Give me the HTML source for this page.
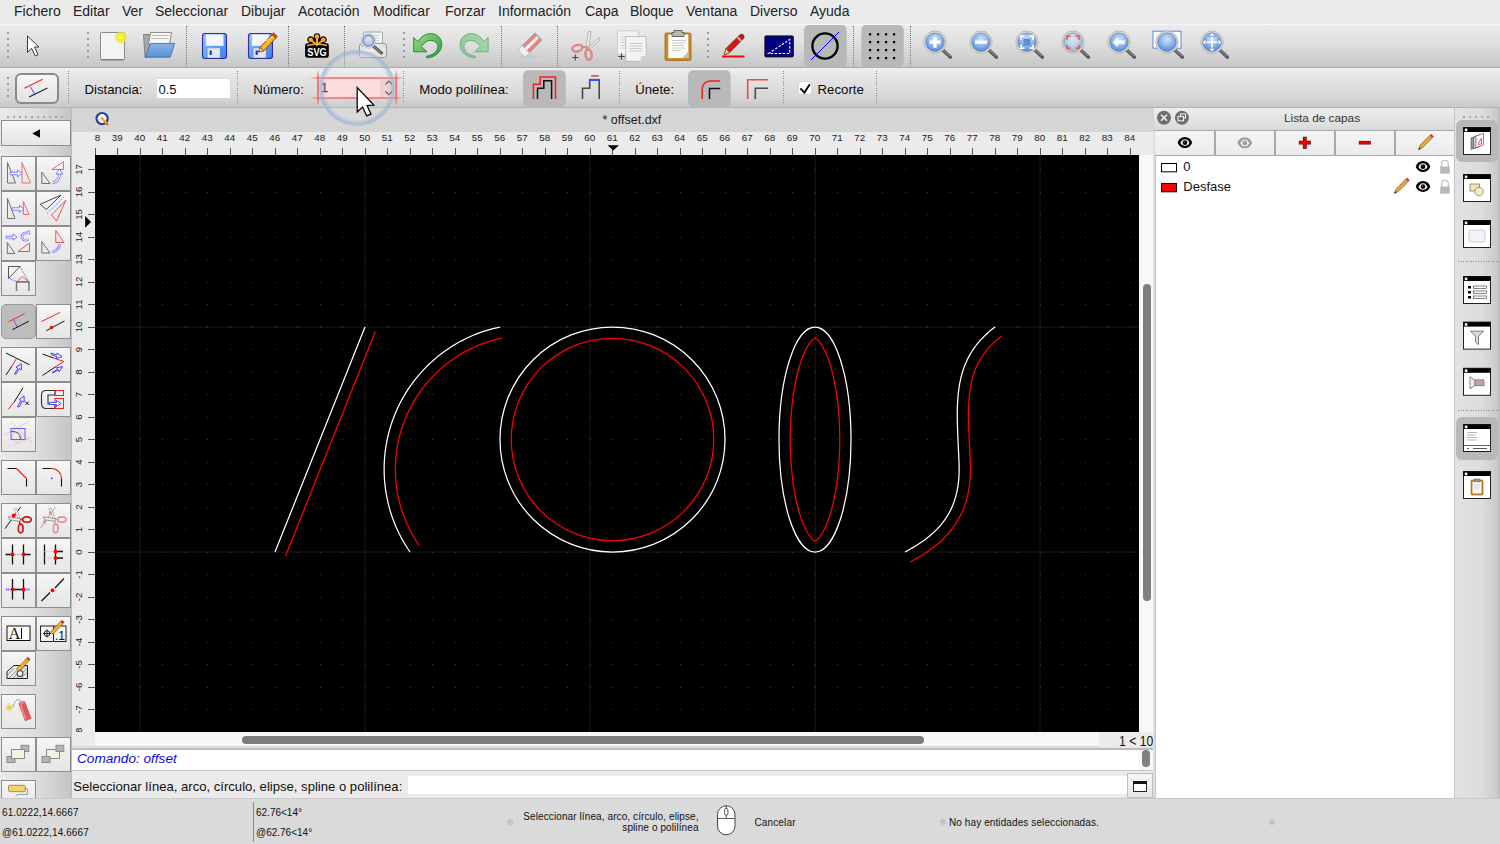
<!DOCTYPE html>
<html><head><meta charset="utf-8">
<style>
*{margin:0;padding:0;box-sizing:border-box}
html,body{width:1500px;height:844px;overflow:hidden;background:#d6d6d6;font-family:"Liberation Sans",sans-serif;color:#1a1a1a}
.a{position:absolute}
.t{position:absolute;white-space:nowrap;line-height:1}
#menubar{left:0;top:0;width:1500px;height:24px;background:#ebebeb}
#menubar span{position:absolute;top:3px;font-size:14px;color:#222}
#tb1{left:0;top:24px;width:1500px;height:44px;background:linear-gradient(#ebebeb,#e2e2e2 35%,#d0d0d0 80%,#c6c6c6);border-top:1px solid #f6f6f6;border-bottom:1px solid #a9a9a9}
#tb2{z-index:2;left:0;top:68px;width:1500px;height:40px;background:linear-gradient(#f0f0f0,#e6e6e6 20%,#d6d6d6 75%,#c8c8c8);border-bottom:1px solid #b4b4b4}
.hdl{position:absolute;width:2px;background:repeating-linear-gradient(#9c9c9c 0 2px,transparent 2px 6px)}
.sep{position:absolute;width:1px;border-left:1px dotted #777}
.sep2{position:absolute;width:1px;background:repeating-linear-gradient(#8a8a8a 0 1px,transparent 1px 2.4px)}
.hdl4{position:absolute;width:2px;height:20px;background:repeating-linear-gradient(#9c9c9c 0 2px,transparent 2px 6px)}
.pressed{position:absolute;background:#b4b4b4;border-radius:7px}
#palette{left:0;top:107px;width:72px;height:691px;background:linear-gradient(90deg,#eaeaea,#dedede 50%,#c6c6c6 97%,#b8b8b8)}
.btn{position:absolute;width:35px;height:35px;border:1px solid #8e8e8e;background:linear-gradient(#f6f6f6,#ededed 50%,#e6e6e6)}
.btn.on{background:#bdbdbd;border-color:#9a9a9a;border-radius:5px}
#mdititle{left:72px;top:107px;width:1083px;height:25px;background:#d5d5d5}
#hruler{left:72px;top:132px;width:1081px;height:23px;background:#ebebeb}
#vruler{left:72px;top:155px;width:23px;height:591px;background:#ebebeb}
#canvas{left:95px;top:155px;width:1044px;height:577px;background:#000;overflow:hidden}
#vscroll{left:1139px;top:155px;width:14px;height:591px;background:#f8f8f8}
#hscroll{left:95px;top:732px;width:1004px;height:14px;background:#f7f7f7}
#status{left:0;top:798px;width:1500px;height:46px;background:#dadada}
#panel{left:1155px;top:107px;width:300px;height:691px;background:#fff;border-left:1px solid #c8c8c8}
#dock{left:1455px;top:107px;width:45px;height:691px;background:linear-gradient(90deg,#e2e2e2,#dcdcdc 60%,#c9c9c9 94%,#b9b9b9)}
</style></head><body>

<div id="menubar" class="a">
<span style="left:14px">Fichero</span>
<span style="left:73px">Editar</span>
<span style="left:122px">Ver</span>
<span style="left:155px">Seleccionar</span>
<span style="left:241px">Dibujar</span>
<span style="left:298px">Acotación</span>
<span style="left:373px">Modificar</span>
<span style="left:445px">Forzar</span>
<span style="left:498px">Información</span>
<span style="left:585px">Capa</span>
<span style="left:630px">Bloque</span>
<span style="left:686px">Ventana</span>
<span style="left:750px">Diverso</span>
<span style="left:810px">Ayuda</span>
</div>

<div id="tb1" class="a">

<div class="hdl" style="left:7px;top:7px;height:27px"></div>
<svg class="a" style="left:0;top:-25px" width="1500" height="68">
<defs>
<linearGradient id="gBlue" x1="0" y1="0" x2="1" y2="1"><stop offset="0" stop-color="#8fc0ff"/><stop offset="1" stop-color="#3c7fe6"/></linearGradient>
<linearGradient id="gGreen" x1="0" y1="0" x2="1" y2="1"><stop offset="0" stop-color="#9bdc7c"/><stop offset="1" stop-color="#2f9e45"/></linearGradient>
<linearGradient id="gGreenL" x1="0" y1="0" x2="1" y2="1"><stop offset="0" stop-color="#a8dab0"/><stop offset="1" stop-color="#86c596"/></linearGradient>
<linearGradient id="gFold" x1="0" y1="0" x2="0" y2="1"><stop offset="0" stop-color="#8ab4e8"/><stop offset="1" stop-color="#5a8fd6"/></linearGradient>
<radialGradient id="gLens" cx="0.5" cy="0.35" r="0.6"><stop offset="0" stop-color="#d6e6fb"/><stop offset="0.6" stop-color="#8fb5ea"/><stop offset="1" stop-color="#5e8fd8"/></radialGradient>
<radialGradient id="gLensG" cx="0.5" cy="0.35" r="0.6"><stop offset="0" stop-color="#dfe7f1"/><stop offset="1" stop-color="#a9bdd6"/></radialGradient>
<radialGradient id="gGlow" cx="0.5" cy="0.5" r="0.5"><stop offset="0" stop-color="#ffffe0"/><stop offset="0.35" stop-color="#f4ef2a"/><stop offset="0.8" stop-color="#ece430" stop-opacity="0.8"/><stop offset="1" stop-color="#f0ea60" stop-opacity="0"/></radialGradient>
</defs>
<!-- pointer -->
<path d="M27.5 36 L27.5 52.5 L31.5 48.2 L35.3 56 L38 54.8 L34.6 47 L38.8 47 Z" fill="#fff" stroke="#3a3a3a" stroke-width="1" stroke-linejoin="miter"/>
<!-- new doc -->
<rect x="100.5" y="32.5" width="24" height="27" rx="1" fill="#f3f3f3" stroke="#8a8a8a"/>
<line x1="101" y1="59.8" x2="124" y2="59.8" stroke="#777" stroke-width="1.2"/>
<circle cx="120.8" cy="37.4" r="6.5" fill="url(#gGlow)"/>
<!-- open -->
<path d="M143.5 34.5 h7 v22 l-5.5 1 z" fill="#a8a8a8" stroke="#6e6e6e" stroke-width="0.8"/>
<path d="M150.5 32.5 h21 l-2 12 h-21 z" fill="#f6f6f6" stroke="#777" stroke-width="0.8"/>
<path d="M152 35.5 h17 M151.5 38.5 h17" stroke="#b5b5b5" stroke-width="1"/>
<path d="M150.2 43.4 L174.5 43.4 L170.3 57.2 L145.4 57.2 Z" fill="url(#gFold)" stroke="#3f6fb5" stroke-width="0.9"/>
<!-- save -->
<g id="floppy">
<rect x="202.5" y="33.5" width="24" height="25" rx="2.5" fill="url(#gBlue)" stroke="#2a2f9a" stroke-width="1.1"/>
<rect x="205.8" y="34.4" width="17.7" height="11.4" fill="#f2f5fc"/>
<rect x="207.6" y="48.2" width="12.3" height="9.5" fill="#e4e4ea"/>
<rect x="209.6" y="50.5" width="2.2" height="4.5" fill="#1a3ad0"/>
</g>
<!-- save as -->
<use href="#floppy" x="46"/>
<path d="M260 47.5 L272 34.5 L275.8 38 L263.8 51 Z" fill="#f8b428" stroke="#8a2c10" stroke-width="0.9"/>
<path d="M266 41 L273.8 36.3" stroke="#ffe070" stroke-width="1"/>
<path d="M260 47.5 L263.8 51 L258.3 52 Z" fill="#f2d8b0" stroke="#8a2c10" stroke-width="0.7"/>
<path d="M258.3 52 L259.2 50.2 L260.2 51.2 Z" fill="#222"/>
<path d="M272 34.5 L273.5 32.8 L277.3 36.3 L275.8 38 Z" fill="#e85030" stroke="#8a2c10" stroke-width="0.8"/>
<!-- svg -->
<rect x="305.1" y="43.4" width="23.7" height="14.4" rx="2.5" fill="#000"/>
<g stroke="#000" stroke-width="6.5" stroke-linecap="round" fill="none"><path d="M317 45 L317 36.5 M317 45 L310.6 39.6 M317 45 L323.4 39.6"/></g>
<path d="M306 45.5 Q317 41 328 45.5" stroke="#000" stroke-width="3" fill="none"/>
<g stroke="#f7a824" stroke-width="2" stroke-linecap="round" fill="none"><path d="M317 45 L317 37 M317 45 L311 40 M317 45 L323 40"/></g>
<circle cx="317" cy="36.6" r="2.3" fill="#f7a824"/><circle cx="310.7" cy="39.7" r="2.3" fill="#f7a824"/><circle cx="323.3" cy="39.7" r="2.3" fill="#f7a824"/>
<path d="M307 45.6 Q317 42.3 327 45.6" stroke="#f7a824" stroke-width="1.6" fill="none"/>
<text x="317" y="56.3" font-family="Liberation Sans" font-weight="bold" font-size="11.5" fill="#fff" text-anchor="middle" textLength="19.5" lengthAdjust="spacingAndGlyphs">SVG</text>
<!-- print preview -->
<rect x="363.5" y="32" width="19" height="14" rx="1" fill="#f4f4f4" stroke="#a0a0a0" stroke-width="0.9"/>
<path d="M366 35.5 h13 M366 38 h13 M366 40.5 h13" stroke="#cfcfcf" stroke-width="1"/>
<path d="M359.5 46 Q359.5 43.4 362 43.4 H384 Q386.5 43.4 386.5 46 V55.5 Q386.5 57.5 384.5 57.5 H361.5 Q359.5 57.5 359.5 55.5 Z" fill="#e4e4e4" stroke="#8c8c8c" stroke-width="0.9"/>
<path d="M360.5 50.5 H385.5" stroke="#f6f6f6" stroke-width="1"/>
<circle cx="362" cy="46" r="0.6" fill="#555"/>
<path d="M372 45 L381.5 53" stroke="#5a5a5a" stroke-width="3.2" stroke-linecap="round"/>
<path d="M372.3 45.3 L381 52.6" stroke="#9a9a9a" stroke-width="1"/>
<circle cx="368.4" cy="40.7" r="7.3" fill="#f0f0f0" stroke="#b8b8b8" stroke-width="0.7"/>
<circle cx="368.4" cy="40.7" r="5.6" fill="url(#gLensG)" stroke="#4f86d0" stroke-width="1.1"/>
<!-- undo -->
<path d="M413.7 37.4 L413.7 51.8 L426.9 51.8 L421.5 46.4 C424 43.2 427 40.4 430.2 40.4 C435 40.4 437.9 43.3 437.9 46.5 C437.9 51.2 432.5 55.6 426.4 56.2 L426.6 57.8 C434.5 57.8 441.8 52 441.8 44.5 C441.8 38 436.5 33.6 430.8 33.6 C425.5 33.6 421 36.8 417.8 41.6 Z" fill="url(#gGreen)" stroke="#17853a" stroke-width="0.9" stroke-linejoin="round"/>
<!-- redo -->
<g transform="translate(901.8,0) scale(-1,1)">
<path d="M413.7 37.4 L413.7 51.8 L426.9 51.8 L421.5 46.4 C424 43.2 427 40.4 430.2 40.4 C435 40.4 437.9 43.3 437.9 46.5 C437.9 51.2 432.5 55.6 426.4 56.2 L426.6 57.8 C434.5 57.8 441.8 52 441.8 44.5 C441.8 38 436.5 33.6 430.8 33.6 C425.5 33.6 421 36.8 417.8 41.6 Z" fill="url(#gGreenL)" stroke="#62ad7c" stroke-width="0.9" stroke-linejoin="round"/>
</g>
<!-- eraser -->
<ellipse cx="531" cy="56.5" rx="11" ry="1.8" fill="#c8c8c8" opacity="0.7"/>
<g transform="translate(530,45) rotate(-45)">
<rect x="-12" y="-5" width="24" height="10" fill="#e08888" stroke="#c06a6a" stroke-width="0.6"/>
<rect x="-7" y="-1.6" width="19" height="3" fill="#f4f4f4"/>
<rect x="-12" y="-5" width="6" height="10" fill="#f2f2f2" stroke="#bdbdbd" stroke-width="0.6"/>
<rect x="11" y="-5" width="1.6" height="10" fill="#aaa"/>
</g>
<!-- cut -->
<path d="M586 47 L588.5 31.5 L591 31.7 L589 46 Z M589 47 L599.5 37.5 L600 40 L590 48.5 Z" fill="#f0f0f0" stroke="#9a9a9a" stroke-width="0.7"/>
<ellipse cx="577.3" cy="48.2" rx="5.2" ry="3.2" transform="rotate(-15 577.3 48.2)" fill="none" stroke="#e08282" stroke-width="2.3"/>
<ellipse cx="588.6" cy="54.6" rx="3.1" ry="5.2" transform="rotate(-8 588.6 54.6)" fill="none" stroke="#e08282" stroke-width="2.3"/>
<path d="M582 47 L587 47.5 L588 49.5" fill="none" stroke="#e08282" stroke-width="2"/>
<path d="M572.3 57.5 h6 M575.3 54.5 v6" stroke="#444" stroke-width="1"/>
<!-- copy -->
<rect x="617.5" y="30.8" width="21" height="24" rx="1" fill="#f2f2f2" stroke="#c2c2c2" stroke-width="0.8"/>
<path d="M620.5 37 h5 M620.5 40 h5 M620.5 42.5 h5 M620.5 45.5 h5 M620.5 48 h5" stroke="#d0d0d0" stroke-width="1"/>
<path d="M625.7 36.5 h20.5 v19 l-5.5 5.8 h-15 z" fill="#f3f3f3" stroke="#b8b8b8" stroke-width="0.9"/>
<path d="M640.7 61.3 l0 -5 l5.5 -0.3 z" fill="#d2d2d2"/>
<path d="M629.5 43.5 h13 M629.5 46 h13 M629.5 48.5 h12 M629.5 51 h13" stroke="#c8c8c8" stroke-width="1"/>
<path d="M618.3 56.5 h6.5 M621.5 53.3 v6.5" stroke="#444" stroke-width="1.1"/>
<!-- paste -->
<rect x="665" y="33" width="26" height="27.5" rx="1.5" fill="#c88a2a" stroke="#9a6418" stroke-width="0.8"/>
<rect x="668.3" y="34.5" width="20" height="23.5" fill="#fbfbfb"/>
<path d="M688.3 51.5 l-6 6.5 h6 z" fill="#bdbdbd"/>
<path d="M672 40.5 h14 M672 43 h14 M672 45.5 h12 M672 48 h14 M672 50.5 h9" stroke="#c8c8c8" stroke-width="1"/>
<path d="M674 30.5 h8 v2 h2 v4 h-12 v-4 h2 z" fill="#b8b8ac" stroke="#5a5a5a" stroke-width="0.9"/>
<!-- pencil red -->
<path d="M722 56.5 h22.5" stroke="#ff0000" stroke-width="2"/>
<path d="M724.2 54.8 L726 48.6 L739.8 34.8 Q742.5 33.4 743.9 35.4 Q744.6 37.5 743.4 38.7 L729.6 52.6 Z" fill="#d21818" stroke="#6a3a10" stroke-width="0.8"/>
<path d="M726 48.6 L729.6 52.6 L724.2 54.8 Z" fill="#f2d0a8" stroke="#6a3a10" stroke-width="0.6"/>
<path d="M737.5 37.1 L741.1 40.9" stroke="#cfcfcf" stroke-width="1.6"/>
<!-- blue rect -->
<rect x="764.9" y="35.9" width="28.4" height="21" rx="1" fill="#000080" stroke="#111" stroke-width="1"/>
<path d="M768.5 53.5 L789.7 39.5 L789.7 53.5 Z" fill="none" stroke="#fff" stroke-width="1.1" stroke-dasharray="2.5 1.5"/>
<!-- pressed circle -->
<rect x="804" y="25" width="42.7" height="42.5" rx="5" fill="#b8b8b8"/>
<circle cx="825" cy="46" r="12.6" fill="none" stroke="#000" stroke-width="2.3"/>
<line x1="811" y1="60" x2="839" y2="32" stroke="#0000ff" stroke-width="1"/>
<!-- pressed grid -->
<rect x="861.3" y="25" width="42.4" height="42.5" rx="5" fill="#b8b8b8"/>
<g fill="#000">
<rect x="869" y="33.2" width="2.2" height="2.2"/><rect x="869" y="41" width="2.2" height="2.2"/><rect x="869" y="49" width="2.2" height="2.2"/><rect x="869" y="57" width="2.2" height="2.2"/><rect x="877" y="33.2" width="2.2" height="2.2"/><rect x="877" y="41" width="2.2" height="2.2"/><rect x="877" y="49" width="2.2" height="2.2"/><rect x="877" y="57" width="2.2" height="2.2"/><rect x="885" y="33.2" width="2.2" height="2.2"/><rect x="885" y="41" width="2.2" height="2.2"/><rect x="885" y="49" width="2.2" height="2.2"/><rect x="885" y="57" width="2.2" height="2.2"/><rect x="893" y="33.2" width="2.2" height="2.2"/><rect x="893" y="41" width="2.2" height="2.2"/><rect x="893" y="49" width="2.2" height="2.2"/><rect x="893" y="57" width="2.2" height="2.2"/>
</g>
<!-- zoom icons -->
<path d="M942.0 49.2 L950.5 57.2" stroke="#5a5a5a" stroke-width="3.4" stroke-linecap="round"/><path d="M943.0 49.800000000000004 L950.0 56.0" stroke="#9a9a9a" stroke-width="1"/><circle cx="935" cy="42.2" r="11.2" fill="#d9d9d0" stroke="#b0b0a8" stroke-width="0.8"/><circle cx="935" cy="42.2" r="9.2" fill="url(#gLens)" stroke="#4a7cc8" stroke-width="0.6"/><path d="M929.5 42.2 h11 M935 36.7 v11" stroke="#fff" stroke-width="3.2"/>
<path d="M988.0 49.2 L996.5 57.2" stroke="#5a5a5a" stroke-width="3.4" stroke-linecap="round"/><path d="M989.0 49.800000000000004 L996.0 56.0" stroke="#9a9a9a" stroke-width="1"/><circle cx="981" cy="42.2" r="11.2" fill="#d9d9d0" stroke="#b0b0a8" stroke-width="0.8"/><circle cx="981" cy="42.2" r="9.2" fill="url(#gLens)" stroke="#4a7cc8" stroke-width="0.6"/><path d="M975 42.2 h12" stroke="#fff" stroke-width="3.2"/>
<path d="M1034.0 49.2 L1042.5 57.2" stroke="#5a5a5a" stroke-width="3.4" stroke-linecap="round"/><path d="M1035.0 49.800000000000004 L1042.0 56.0" stroke="#9a9a9a" stroke-width="1"/><circle cx="1027" cy="42.2" r="11.2" fill="#d9d9d0" stroke="#b0b0a8" stroke-width="0.8"/><circle cx="1027" cy="42.2" r="9.2" fill="url(#gLens)" stroke="#4a7cc8" stroke-width="0.6"/><path d="M1021 39.7 v-3.5 h3.5" fill="none" stroke="#fff" stroke-width="1.8"/><path d="M1021 44.7 v3.5 h3.5" fill="none" stroke="#fff" stroke-width="1.8"/><path d="M1033 39.7 v-3.5 h-3.5" fill="none" stroke="#fff" stroke-width="1.8"/><path d="M1033 44.7 v3.5 h-3.5" fill="none" stroke="#fff" stroke-width="1.8"/><rect x="1023.5" y="38.7" width="7" height="7" fill="#5d8fd8"/>
<path d="M1080.0 49.2 L1088.5 57.2" stroke="#5a5a5a" stroke-width="3.4" stroke-linecap="round"/><path d="M1081.0 49.800000000000004 L1088.0 56.0" stroke="#9a9a9a" stroke-width="1"/><circle cx="1073" cy="42.2" r="11.2" fill="#d9d9d0" stroke="#b0b0a8" stroke-width="0.8"/><circle cx="1073" cy="42.2" r="9.2" fill="url(#gLensG)" stroke="#4a7cc8" stroke-width="0.6"/><path d="M1067 39.7 v-3.5 h3.5" fill="none" stroke="#e06060" stroke-width="1.8"/><path d="M1067 44.7 v3.5 h3.5" fill="none" stroke="#e06060" stroke-width="1.8"/><path d="M1079 39.7 v-3.5 h-3.5" fill="none" stroke="#e06060" stroke-width="1.8"/><path d="M1079 44.7 v3.5 h-3.5" fill="none" stroke="#e06060" stroke-width="1.8"/>
<path d="M1126.0 49.2 L1134.5 57.2" stroke="#5a5a5a" stroke-width="3.4" stroke-linecap="round"/><path d="M1127.0 49.800000000000004 L1134.0 56.0" stroke="#9a9a9a" stroke-width="1"/><circle cx="1119" cy="42.2" r="11.2" fill="#d9d9d0" stroke="#b0b0a8" stroke-width="0.8"/><circle cx="1119" cy="42.2" r="9.2" fill="url(#gLens)" stroke="#4a7cc8" stroke-width="0.6"/><path d="M1113 42.2 l4.5 -4.5 v3 h7 v3 h-7 v3 z" fill="#fff" stroke="#fff" stroke-width="0.6" stroke-linejoin="round"/>
<rect x="1153" y="31.200000000000003" width="28" height="17" fill="#fff" stroke="#5a8ad0" stroke-width="1"/><path d="M1174.0 49.2 L1182.5 57.2" stroke="#5a5a5a" stroke-width="3.4" stroke-linecap="round"/><path d="M1175.0 49.800000000000004 L1182.0 56.0" stroke="#9a9a9a" stroke-width="1"/><circle cx="1167" cy="42.2" r="11.2" fill="#d9d9d0" stroke="#b0b0a8" stroke-width="0.8"/><circle cx="1167" cy="42.2" r="9.2" fill="url(#gLens)" stroke="#4a7cc8" stroke-width="0.6"/>
<path d="M1219.0 49.2 L1227.5 57.2" stroke="#5a5a5a" stroke-width="3.4" stroke-linecap="round"/><path d="M1220.0 49.800000000000004 L1227.0 56.0" stroke="#9a9a9a" stroke-width="1"/><circle cx="1212" cy="42.2" r="11.2" fill="#d9d9d0" stroke="#b0b0a8" stroke-width="0.8"/><circle cx="1212" cy="42.2" r="9.2" fill="url(#gLens)" stroke="#4a7cc8" stroke-width="0.6"/><path d="M1204 42.2 h16 M1212 34.2 v16" stroke="#fff" stroke-width="1.6"/><path d="M1222 42.2 l-4 -3.5 v7 z" fill="#fff" stroke="#4a7cc8" stroke-width="0.7"/><path d="M1202 42.2 l4 -3.5 v7 z" fill="#fff" stroke="#4a7cc8" stroke-width="0.7"/><path d="M1212 52.2 l-3.5 -4 h7 z" fill="#fff" stroke="#4a7cc8" stroke-width="0.7"/><path d="M1212 32.2 l-3.5 4 h7 z" fill="#fff" stroke="#4a7cc8" stroke-width="0.7"/>
</svg>
<div class="sep" style="left:186px;top:1px;height:40px"></div>
<div class="sep" style="left:288px;top:1px;height:40px"></div>
<div class="sep" style="left:344px;top:1px;height:40px"></div>
<div class="hdl" style="left:87px;top:7px;height:27px"></div>
<div class="hdl" style="left:403px;top:7px;height:27px"></div>
<div class="sep" style="left:501px;top:1px;height:40px"></div>
<div class="sep" style="left:557px;top:1px;height:40px"></div>
<div class="hdl" style="left:707px;top:7px;height:27px"></div>
<div class="sep" style="left:853px;top:1px;height:40px"></div>
<div class="sep" style="left:910px;top:1px;height:40px"></div>

</div>

<div id="tb2" class="a">

<div class="hdl4" style="left:7px;top:9px"></div>
<div class="a" style="left:14.5px;top:4.8px;width:44px;height:31.5px;border:2px solid #8a8a8a;border-radius:6px;background:linear-gradient(#f7f7f7,#ececec 50%,#e2e2e2)"></div>
<svg class="a" style="left:0;top:-68px" width="1500" height="108">
<path d="M24.5 88.3 L42.6 79.2" stroke="#ff2020" stroke-width="1.1"/>
<path d="M29.1 97 L47.4 88" stroke="#222" stroke-width="1.1"/>
<path d="M30.5 87 L35 94.5" stroke="#3030ff" stroke-width="0.9"/>
<rect x="523.1" y="70.2" width="42.7" height="36.5" rx="5" fill="#b9b9b9"/>
<path d="M533.4 99 V84.2 H540.2 V77 H555.5 V99" fill="none" stroke="#ff1a1a" stroke-width="1.5"/>
<path d="M537.5 99 V88.3 H543.8 V80.8 H551.6 V99" fill="none" stroke="#111" stroke-width="1.5"/>
<path d="M582.5 99 V88.2 H589.7 V79.7 H599.2 V99" fill="none" stroke="#4a4a4a" stroke-width="1.6"/>
<path d="M589.7 79.9 H599.2" stroke="#3a50ff" stroke-width="2.2"/>
<path d="M591.1 75.9 H598.7" stroke="#f05050" stroke-width="1.8"/>
<rect x="688.1" y="70.2" width="42.5" height="36.5" rx="5" fill="#b9b9b9"/>
<path d="M702.2 99 V89 A8 8 0 0 1 710.2 81 H720.2" fill="none" stroke="#ff1a1a" stroke-width="1.5"/>
<path d="M709.5 99 V88.5 H720.2" fill="none" stroke="#111" stroke-width="1.5"/>
<path d="M747.7 99 V79.7 H767.9" fill="none" stroke="#f04848" stroke-width="1.6"/>
<path d="M755.3 99 V88.2 H767.9" fill="none" stroke="#4a4a4a" stroke-width="1.6"/>
<path d="M800.4 88.4 L804.4 92.6 L809.8 84.2" fill="none" stroke="#111" stroke-width="2"/>
</svg>
<div class="a" style="left:798.8px;top:13.6px;width:12px;height:12.4px;background:#fff;border-radius:2.5px;box-shadow:0 0 0 0.5px #d0d0d0"></div>
<svg class="a" style="left:0;top:-68px" width="1500" height="108"><path d="M800.4 88.4 L804.4 92.6 L809.8 84.2" fill="none" stroke="#111" stroke-width="2"/></svg>
<div class="sep2" style="left:68px;top:3px;height:34px"></div>
<div class="sep2" style="left:237px;top:3px;height:34px"></div>
<div class="sep2" style="left:403px;top:3px;height:34px"></div>
<div class="sep2" style="left:619px;top:3px;height:34px"></div>
<div class="sep2" style="left:783px;top:3px;height:34px"></div>
<div class="sep2" style="left:876px;top:3px;height:34px"></div>
<span class="t" style="left:84.5px;top:15px;font-size:13.2px;color:#0a0a0a">Distancia:</span>
<div class="a" style="left:156.8px;top:10.9px;width:73.2px;height:19.1px;background:#fff;box-shadow:0 0 0 0.5px #d8d8d8"></div>
<span class="t" style="left:158.5px;top:15px;font-size:13px;color:#111">0.5</span>
<span class="t" style="left:253.3px;top:15px;font-size:13.2px;color:#0a0a0a">Número:</span>
<span class="t" style="left:419.2px;top:15px;font-size:13.2px;color:#0a0a0a">Modo polilínea:</span>
<span class="t" style="left:635.2px;top:15px;font-size:13.2px;color:#0a0a0a">Únete:</span>
<span class="t" style="left:817.6px;top:15px;font-size:13.2px;color:#0a0a0a">Recorte</span>

</div>

<div id="palette" class="a">

<div class="a" style="left:7px;top:9px;width:58px;height:2px;background:repeating-linear-gradient(90deg,#a4a4a4 0 2px,transparent 2px 6px)"></div>
<div class="a" style="left:1px;top:13px;width:70px;height:26px;border:1px solid #8e8e8e;background:linear-gradient(#f7f7f7,#ededed 50%,#e6e6e6)"></div>
<svg class="a" style="left:0;top:0" width="72" height="40"><path d="M32.3 26.5 L40 22.3 L40 30.7 Z" fill="#000"/></svg>
<div class="btn" style="left:1px;top:49px"></div>
<div class="btn" style="left:36px;top:49px"></div>
<div class="btn" style="left:1px;top:84px"></div>
<div class="btn" style="left:36px;top:84px"></div>
<div class="btn" style="left:1px;top:119px"></div>
<div class="btn" style="left:36px;top:119px"></div>
<div class="btn" style="left:1px;top:154px"></div>
<div class="btn on" style="left:1px;top:197px"></div>
<div class="btn" style="left:36px;top:197px"></div>
<div class="btn" style="left:1px;top:240px"></div>
<div class="btn" style="left:36px;top:240px"></div>
<div class="btn" style="left:1px;top:275px"></div>
<div class="btn" style="left:36px;top:275px"></div>
<div class="btn" style="left:1px;top:310px"></div>
<div class="btn" style="left:1px;top:353px"></div>
<div class="btn" style="left:36px;top:353px"></div>
<div class="btn" style="left:1px;top:396px"></div>
<div class="btn" style="left:36px;top:396px"></div>
<div class="btn" style="left:1px;top:431px"></div>
<div class="btn" style="left:36px;top:431px"></div>
<div class="btn" style="left:1px;top:466px"></div>
<div class="btn" style="left:36px;top:466px"></div>
<div class="btn" style="left:1px;top:509px"></div>
<div class="btn" style="left:36px;top:509px"></div>
<div class="btn" style="left:1px;top:544px"></div>
<div class="btn" style="left:1px;top:587px"></div>
<div class="btn" style="left:1px;top:630px"></div>
<div class="btn" style="left:36px;top:630px"></div>
<div class="btn" style="left:1px;top:673px"></div>
<svg class="a" style="left:0;top:-107px" width="72" height="800" fill="none" stroke-width="1">
<!-- move -->
<path d="M7.5 162.5 V183 H15.5 Z" stroke="#707070"/>
<path d="M22 162.5 V183 H30.5 Z" stroke="#f06a6a"/>
<path d="M10 172.3 h7.5 v-2.2 l4.5 3.4 l-4.5 3.4 v-2.2 h-7.5 z" stroke="#6d6dff" stroke-width="0.9" fill="#fff"/>
<!-- rotate -->
<path d="M41.8 172 V183.5 H50 Z" stroke="#707070"/>
<path d="M51.8 169.5 L63.5 161.8 V169.5 Z" stroke="#f06a6a"/>
<path d="M52.5 182.8 Q59.5 181.5 59.4 173.5" stroke="#7a7aff" stroke-width="2.8"/><path d="M52.5 182.8 Q59.5 181.5 59.4 173.5" stroke="#fff" stroke-width="1.1"/>
<path d="M56 174 l3.4 -5 l3.4 5 z" stroke="#6d6dff" stroke-width="0.9" fill="#fff"/>
<!-- scale -->
<path d="M7.5 198.5 V218.5 H15 Z" stroke="#707070"/>
<path d="M23.3 201.5 V214.5 H29 Z" stroke="#f06a6a"/>
<path d="M12 207.8 h7.5 v-2.2 l4.5 3.4 l-4.5 3.4 v-2.2 h-7.5 z" stroke="#6d6dff" stroke-width="0.9" fill="#fff"/>
<!-- mirror -->
<path d="M40.3 204.3 L61 195 L46.3 209.5 Z" stroke="#444"/>
<path d="M66 200 L51.5 215 L56.5 221 Z" stroke="#f05050"/>
<path d="M47 213.5 L64 197" stroke="#6d6dff" stroke-dasharray="1.6 1.6"/>
<!-- move rotate -->
<path d="M6 236.2 h7 v-2 l4 3 l-4 3 v-2 h-7 z" stroke="#6d6dff" stroke-width="0.9" fill="#fff"/>
<path d="M27.8 233.8 A3.6 3.6 0 1 0 28.3 239" stroke="#7a7aff" stroke-width="2.6"/><path d="M27.8 233.8 A3.6 3.6 0 1 0 28.3 239" stroke="#fff" stroke-width="1"/><path d="M26 232 l3.5 -1.5 l0.3 4 z" fill="#fff" stroke="#7a7aff" stroke-width="0.8"/>
<path d="M7.3 242.5 V253.5 H15 Z" stroke="#707070"/>
<path d="M18 251.5 L29.5 243 V251.5 Z" stroke="#f05050"/>
<!-- rotate2 -->
<path d="M41.8 241.5 V253 H50 Z" stroke="#707070"/>
<path d="M55.8 230.5 V242.5 H64 Z" stroke="#f05050"/>
<path d="M52 252 Q59 250.5 59.5 244.5" stroke="#7a7aff" stroke-width="2.8"/><path d="M52 252 Q59 250.5 59.5 244.5" stroke="#fff" stroke-width="1.1" stroke-dasharray="1.5 0.8"/>
<!-- rotate3 -->
<path d="M8.5 266.5 H20 L8.5 278.5 Z" stroke="#555"/>
<path d="M8.5 278.5 L17 281.5 M20 266.5 L28.5 281.5" stroke="#7a7aff" stroke-width="0.7"/>
<path d="M17 281.5 L22.5 276.5 L28.5 281.5 Z" stroke="#f05050"/>
<path d="M16.5 291 V282 H29 V291" stroke="#777" stroke-width="1.4"/>
<!-- offset -->
<path d="M8.3 322 L24.7 313.5" stroke="#ff1f1f"/>
<path d="M13.5 319.5 L17.5 327.5" stroke="#5050ff" stroke-width="0.9"/>
<path d="M12.3 329.7 L28.8 321.2" stroke="#111"/>
<path d="M41.3 321.6 L60 312.4" stroke="#ff1f1f"/>
<path d="M46.3 330.7 L64.5 321" stroke="#111"/>
<circle cx="51.5" cy="327.5" r="1.7" fill="#ff0000" stroke="none"/>
<!-- trim -->
<path d="M6 353 L29.5 364.7 M6 375 L12 366" stroke="#111"/>
<path d="M12 366 L16.5 358.5" stroke="#f02020"/>
<path d="M14.5 374 l3.5 -5.5 l-2 -1.3 l5.2 -3.5 l0.3 6.2 l-2 -1.3 l-3.5 5.5 z" stroke="#3030ff" stroke-width="0.9"/>
<!-- trim2 -->
<path d="M42.5 354 L53.5 358 M56 366.5 L42.5 375.5" stroke="#111"/>
<path d="M53.5 358 L63.8 361.5 L56 366.5" stroke="#f02020"/>
<path d="M51 353 l5.5 2 l0.7 -2 l4.8 3.8 l-6 1.8 l0.7 -2 l-5.5 -2 z" stroke="#3030ff" stroke-width="0.9"/>
<path d="M52 372.5 l5.5 -3 l-1 -1.8 l6 -1 l-3.3 5 l-1 -1.8 l-5.5 3 z" stroke="#3030ff" stroke-width="0.9"/>
<!-- lengthen -->
<path d="M23 387.8 L14.2 402" stroke="#111"/>
<path d="M14.2 402 L8.2 409.5" stroke="#f02020"/>
<path d="M17.5 406.5 l3.5 -6 l-1.8 -1 l4.8 -3.5 l0.3 6 l-1.8 -1 l-3.5 6 z" stroke="#3030ff" stroke-width="0.9"/>
<path d="M25.3 401.5 l3.5 3.5 M28.8 401.5 l-3.5 3.5" stroke="#222"/>
<!-- stretch -->
<path d="M55 390.5 H46 Q41.5 390.5 41.5 395 V403 Q41.5 408.5 46 408.5 H55 V404 H48 V395 H55 Z" stroke="#333" stroke-width="1.1"/>
<rect x="55" y="390.5" width="8.5" height="5" stroke="#f02020"/>
<rect x="55" y="398.5" width="8.5" height="10" stroke="#f02020"/>
<path d="M49.5 402.5 h7 v-2 l4.5 3 l-4.5 3 v-2 h-7 z" stroke="#4040ff" stroke-width="0.9" fill="#fff"/>
<!-- faint -->
<path d="M4 435 L29 421.5 M14 445.5 L31 437 M11 421.5 L32 443" stroke="#f4b4b4" stroke-width="0.8"/>
<circle cx="17" cy="437" r="5" stroke="#f4b4b4" stroke-width="0.8"/>
<rect x="11" y="428.5" width="14" height="11" stroke="#6060ff"/>
<path d="M11.5 431.5 Q20.5 431 20.5 439.5" stroke="#555"/>
<!-- chamfer -->
<path d="M7.5 468.5 H16.5 M26.5 478.5 V486.5" stroke="#111" stroke-width="1.1"/>
<path d="M16.5 468.5 L26.5 478.5" stroke="#f01a1a" stroke-width="1.2"/>
<path d="M42.5 468.5 H51.5 M61.5 478.5 V486.5" stroke="#111" stroke-width="1.1"/>
<path d="M51.5 468.5 A10 10 0 0 1 61.5 478.5" stroke="#f01a1a" stroke-width="1.2"/>
<circle cx="51.8" cy="478.3" r="0.9" fill="#2020ff" stroke="none"/>
<!-- break out -->
<g transform="translate(0,0)"><path d="M5 528.7 L20.5 507" stroke="#111" stroke-width="1"/><path d="M14 509 L16.3 508.3 L20.3 519 L18.5 519.3 Z" fill="#fafafa" stroke="#8a8a8a" stroke-width="0.6"/><path d="M8.2 516.8 L20.6 518.8 L20.2 521.3 L9.6 519.8 Z" fill="#f0f0f0" stroke="#707070" stroke-width="0.7"/><path d="M20.5 519.5 L22.8 519.5 M19.3 521.3 L20 524" stroke="#d01818" stroke-width="1.5"/><ellipse cx="26.9" cy="519.5" rx="4.3" ry="2.7" stroke="#d01818" stroke-width="1.7"/><ellipse cx="20.7" cy="528.5" rx="2.4" ry="4.3" stroke="#d01818" stroke-width="1.7"/><circle cx="13.7" cy="515.5" r="1.9" fill="#f00" stroke="none"/></g>
<g transform="translate(35,0)"><path d="M5 528.7 L20.5 507" stroke="#aaa" stroke-width="1"/><path d="M14 509 L16.3 508.3 L20.3 519 L18.5 519.3 Z" fill="#fafafa" stroke="#8a8a8a" stroke-width="0.6"/><path d="M8.2 516.8 L20.6 518.8 L20.2 521.3 L9.6 519.8 Z" fill="#f0f0f0" stroke="#707070" stroke-width="0.7"/><path d="M20.5 519.5 L22.8 519.5 M19.3 521.3 L20 524" stroke="#e89090" stroke-width="1.5"/><ellipse cx="26.9" cy="519.5" rx="4.3" ry="2.7" stroke="#e89090" stroke-width="1.7"/><ellipse cx="20.7" cy="528.5" rx="2.4" ry="4.3" stroke="#e89090" stroke-width="1.7"/><circle cx="15.5" cy="513" r="1.7" fill="#f48a8a" stroke="none"/><circle cx="9.5" cy="522" r="1.7" fill="#f48a8a" stroke="none"/></g>
<!-- divide -->
<path d="M12.5 544.5 V564.5 M23.5 544.5 V564.5 M5.5 554.5 H12.5 M23.5 554.5 H30.5" stroke="#111" stroke-width="1.3"/>
<path d="M12.5 554.5 H23.5" stroke="#bbb"/>
<circle cx="12.5" cy="554.5" r="1.9" fill="#f00" stroke="none"/>
<circle cx="23.5" cy="554.5" r="1.9" fill="#f00" stroke="none"/>
<path d="M44.5 544.5 V564.5 M55.5 544.5 V564.5 M55.5 551.5 H63 M55.5 558 H63" stroke="#111" stroke-width="1.3"/>
<path d="M44.5 551.5 H55.5 M44.5 558 H55.5" stroke="#c8c8c8" stroke-dasharray="1 1"/>
<circle cx="55.5" cy="551.5" r="1.9" fill="#f00" stroke="none"/>
<circle cx="55.5" cy="558" r="1.9" fill="#f00" stroke="none"/>
<path d="M12.5 579 V599.5 M23.5 579 V599.5 M12.5 589.5 H23.5" stroke="#111" stroke-width="1.3"/>
<path d="M6 588 l3 3 M9 588 l-3 3 M26.5 588 l3 3 M29.5 588 l-3 3 M6 589.5 h6 M24 589.5 h5.5" stroke="#6a6aff" stroke-width="0.7"/>
<circle cx="12.5" cy="589.5" r="1.9" fill="#f00" stroke="none"/>
<circle cx="23.5" cy="589.5" r="1.9" fill="#f00" stroke="none"/>
<path d="M41.5 601 L50 592.5 M55 588 L64 578.5" stroke="#111" stroke-width="1.2"/>
<circle cx="52.5" cy="590.3" r="1.9" fill="#f00" stroke="none"/>
<!-- text -->
<rect x="7" y="626" width="23" height="14.5" stroke="#111" fill="#fff"/>
<text x="8.6" y="639.3" font-family="Liberation Serif" font-size="16.5" fill="#111" stroke="none">A</text>
<path d="M21.5 628 V639" stroke="#111"/>
<!-- dim -->
<rect x="40.5" y="626" width="25.5" height="15.5" stroke="#222" fill="#f5f5f5"/>
<path d="M53.5 626 V641.5" stroke="#222"/>
<circle cx="47" cy="633.5" r="2.8" stroke="#222"/>
<path d="M43 633.5 H51 M47 629.5 V637.5" stroke="#222"/>
<text x="55" y="639.5" font-family="Liberation Sans" font-size="12" fill="#111" stroke="none">.1</text>
<path d="M50.5 632 L60.5 621.5 L63 623.8 L53 634.3 Z" fill="#f0b030" stroke="#7a4a10" stroke-width="0.6"/>
<path d="M60.5 621.5 L62 620 L64.5 622.3 L63 623.8 Z" fill="#e02020" stroke="none"/>
<!-- hatch -->
<path d="M7 678.5 H27.5 V665.5 H14 L7 671.5 Z" stroke="#222" fill="#e8e8e8"/>
<path d="M9 678 L22 665.5 M13 678 L26 665.5 M17 678 L27.5 668 M21 678 L27.5 672 M7.5 675 L14 668.5" stroke="#555" stroke-width="0.6"/>
<circle cx="20" cy="673.5" r="3" stroke="#222" fill="#f2f2f2"/>
<path d="M16.5 669 L26.5 658.5 L29 660.8 L19 671.3 Z" fill="#f0b030" stroke="#7a4a10" stroke-width="0.6"/>
<path d="M26.5 658.5 L28 657 L30.5 659.3 L29 660.8 Z" fill="#e02020" stroke="none"/>
<!-- explode -->
<path d="M13 707 Q15 700 18 699.5 Q20 699.5 21 702" stroke="#999" stroke-width="0.9"/>
<path d="M21.8 702.8 L28.3 720" stroke="#d85a5a" stroke-width="7" stroke-linecap="butt"/><ellipse cx="21.8" cy="702.8" rx="3.5" ry="1.6" transform="rotate(-20 21.8 702.8)" fill="#e88080"/><path d="M20.5 705 L25.8 719" stroke="#ec8e8e" stroke-width="1.8"/>
<circle cx="9.3" cy="707.5" r="2.6" fill="#f4e060" stroke="none"/>
<path d="M5 707.5 h8.6 M9.3 703.2 v8.6 M6.3 704.5 l6 6 M12.3 704.5 l-6 6" stroke="#e8c820" stroke-width="0.7"/>
<!-- order -->
<rect x="7" y="756.5" width="8" height="6" fill="#b4b4b4" stroke="#8a8a8a"/>
<rect x="21" y="745.3" width="7.8" height="6.2" fill="#b4b4b4" stroke="#8a8a8a"/>
<rect x="11.5" y="749.5" width="13" height="9" fill="#f6f2de" stroke="#8a8a8a"/>
<rect x="46.5" y="749.5" width="13" height="9" fill="#f6f2de" stroke="#8a8a8a"/>
<rect x="42" y="756.5" width="8" height="6" fill="#b4b4b4" stroke="#8a8a8a"/>
<rect x="56" y="745.3" width="7.8" height="6.2" fill="#b4b4b4" stroke="#8a8a8a"/>
<!-- roller -->
<rect x="8.5" y="785.3" width="16.8" height="6.4" rx="1.5" fill="#f2d468" stroke="#8a7a40" stroke-width="0.8"/>
<path d="M25.3 788.5 h2 v6 h-10 l-1.5 2" stroke="#888" stroke-width="0.8"/>
</svg>

</div>

<div id="mdititle" class="a">

<svg class="a" style="left:0;top:0" width="60" height="25">
<circle cx="30.1" cy="11.6" r="5.6" fill="#fafafa" stroke="#2a3f8f" stroke-width="2.2"/>
<path d="M27.5 8.5 L31 13 M26 12.5 L29 12" stroke="#c0c0c0" stroke-width="0.7"/>
<path d="M29.5 10.5 L34.5 16.5" stroke="#f0a010" stroke-width="2.2"/>
<circle cx="35.3" cy="17.3" r="1.3" fill="#e06060"/>
</svg>
<span class="t" style="left:530.5px;top:6.5px;font-size:12.5px;color:#1a1a1a">* offset.dxf</span>

</div>
<div id="hruler" class="a"><svg width="1081" height="23" style="position:absolute;left:0;top:0"><defs><clipPath id="hrc"><rect x="23" y="0" width="1058" height="23"/></clipPath></defs><g clip-path="url(#hrc)"><line x1="23.5" y1="16" x2="23.5" y2="23" stroke="#555" stroke-width="1"/><text x="22.7" y="8.9" font-size="9.8" text-anchor="middle" font-family="Liberation Sans" fill="#1a1a1a">38</text><line x1="45.5" y1="16" x2="45.5" y2="23" stroke="#555" stroke-width="1"/><text x="45.2" y="8.9" font-size="9.8" text-anchor="middle" font-family="Liberation Sans" fill="#1a1a1a">39</text><line x1="68.5" y1="16" x2="68.5" y2="23" stroke="#555" stroke-width="1"/><text x="67.7" y="8.9" font-size="9.8" text-anchor="middle" font-family="Liberation Sans" fill="#1a1a1a">40</text><line x1="90.5" y1="16" x2="90.5" y2="23" stroke="#555" stroke-width="1"/><text x="90.2" y="8.9" font-size="9.8" text-anchor="middle" font-family="Liberation Sans" fill="#1a1a1a">41</text><line x1="113.5" y1="16" x2="113.5" y2="23" stroke="#555" stroke-width="1"/><text x="112.7" y="8.9" font-size="9.8" text-anchor="middle" font-family="Liberation Sans" fill="#1a1a1a">42</text><line x1="135.5" y1="16" x2="135.5" y2="23" stroke="#555" stroke-width="1"/><text x="135.2" y="8.9" font-size="9.8" text-anchor="middle" font-family="Liberation Sans" fill="#1a1a1a">43</text><line x1="158.5" y1="16" x2="158.5" y2="23" stroke="#555" stroke-width="1"/><text x="157.7" y="8.9" font-size="9.8" text-anchor="middle" font-family="Liberation Sans" fill="#1a1a1a">44</text><line x1="180.5" y1="16" x2="180.5" y2="23" stroke="#555" stroke-width="1"/><text x="180.2" y="8.9" font-size="9.8" text-anchor="middle" font-family="Liberation Sans" fill="#1a1a1a">45</text><line x1="203.5" y1="16" x2="203.5" y2="23" stroke="#555" stroke-width="1"/><text x="202.7" y="8.9" font-size="9.8" text-anchor="middle" font-family="Liberation Sans" fill="#1a1a1a">46</text><line x1="225.5" y1="16" x2="225.5" y2="23" stroke="#555" stroke-width="1"/><text x="225.2" y="8.9" font-size="9.8" text-anchor="middle" font-family="Liberation Sans" fill="#1a1a1a">47</text><line x1="248.5" y1="16" x2="248.5" y2="23" stroke="#555" stroke-width="1"/><text x="247.7" y="8.9" font-size="9.8" text-anchor="middle" font-family="Liberation Sans" fill="#1a1a1a">48</text><line x1="270.5" y1="16" x2="270.5" y2="23" stroke="#555" stroke-width="1"/><text x="270.2" y="8.9" font-size="9.8" text-anchor="middle" font-family="Liberation Sans" fill="#1a1a1a">49</text><line x1="293.5" y1="16" x2="293.5" y2="23" stroke="#555" stroke-width="1"/><text x="292.7" y="8.9" font-size="9.8" text-anchor="middle" font-family="Liberation Sans" fill="#1a1a1a">50</text><line x1="315.5" y1="16" x2="315.5" y2="23" stroke="#555" stroke-width="1"/><text x="315.2" y="8.9" font-size="9.8" text-anchor="middle" font-family="Liberation Sans" fill="#1a1a1a">51</text><line x1="338.5" y1="16" x2="338.5" y2="23" stroke="#555" stroke-width="1"/><text x="337.7" y="8.9" font-size="9.8" text-anchor="middle" font-family="Liberation Sans" fill="#1a1a1a">52</text><line x1="360.5" y1="16" x2="360.5" y2="23" stroke="#555" stroke-width="1"/><text x="360.2" y="8.9" font-size="9.8" text-anchor="middle" font-family="Liberation Sans" fill="#1a1a1a">53</text><line x1="383.5" y1="16" x2="383.5" y2="23" stroke="#555" stroke-width="1"/><text x="382.7" y="8.9" font-size="9.8" text-anchor="middle" font-family="Liberation Sans" fill="#1a1a1a">54</text><line x1="405.5" y1="16" x2="405.5" y2="23" stroke="#555" stroke-width="1"/><text x="405.2" y="8.9" font-size="9.8" text-anchor="middle" font-family="Liberation Sans" fill="#1a1a1a">55</text><line x1="428.5" y1="16" x2="428.5" y2="23" stroke="#555" stroke-width="1"/><text x="427.7" y="8.9" font-size="9.8" text-anchor="middle" font-family="Liberation Sans" fill="#1a1a1a">56</text><line x1="450.5" y1="16" x2="450.5" y2="23" stroke="#555" stroke-width="1"/><text x="450.2" y="8.9" font-size="9.8" text-anchor="middle" font-family="Liberation Sans" fill="#1a1a1a">57</text><line x1="473.5" y1="16" x2="473.5" y2="23" stroke="#555" stroke-width="1"/><text x="472.7" y="8.9" font-size="9.8" text-anchor="middle" font-family="Liberation Sans" fill="#1a1a1a">58</text><line x1="495.5" y1="16" x2="495.5" y2="23" stroke="#555" stroke-width="1"/><text x="495.2" y="8.9" font-size="9.8" text-anchor="middle" font-family="Liberation Sans" fill="#1a1a1a">59</text><line x1="518.5" y1="16" x2="518.5" y2="23" stroke="#555" stroke-width="1"/><text x="517.7" y="8.9" font-size="9.8" text-anchor="middle" font-family="Liberation Sans" fill="#1a1a1a">60</text><line x1="540.5" y1="16" x2="540.5" y2="23" stroke="#555" stroke-width="1"/><text x="540.2" y="8.9" font-size="9.8" text-anchor="middle" font-family="Liberation Sans" fill="#1a1a1a">61</text><line x1="563.5" y1="16" x2="563.5" y2="23" stroke="#555" stroke-width="1"/><text x="562.7" y="8.9" font-size="9.8" text-anchor="middle" font-family="Liberation Sans" fill="#1a1a1a">62</text><line x1="585.5" y1="16" x2="585.5" y2="23" stroke="#555" stroke-width="1"/><text x="585.2" y="8.9" font-size="9.8" text-anchor="middle" font-family="Liberation Sans" fill="#1a1a1a">63</text><line x1="608.5" y1="16" x2="608.5" y2="23" stroke="#555" stroke-width="1"/><text x="607.7" y="8.9" font-size="9.8" text-anchor="middle" font-family="Liberation Sans" fill="#1a1a1a">64</text><line x1="630.5" y1="16" x2="630.5" y2="23" stroke="#555" stroke-width="1"/><text x="630.2" y="8.9" font-size="9.8" text-anchor="middle" font-family="Liberation Sans" fill="#1a1a1a">65</text><line x1="653.5" y1="16" x2="653.5" y2="23" stroke="#555" stroke-width="1"/><text x="652.7" y="8.9" font-size="9.8" text-anchor="middle" font-family="Liberation Sans" fill="#1a1a1a">66</text><line x1="675.5" y1="16" x2="675.5" y2="23" stroke="#555" stroke-width="1"/><text x="675.2" y="8.9" font-size="9.8" text-anchor="middle" font-family="Liberation Sans" fill="#1a1a1a">67</text><line x1="698.5" y1="16" x2="698.5" y2="23" stroke="#555" stroke-width="1"/><text x="697.7" y="8.9" font-size="9.8" text-anchor="middle" font-family="Liberation Sans" fill="#1a1a1a">68</text><line x1="720.5" y1="16" x2="720.5" y2="23" stroke="#555" stroke-width="1"/><text x="720.2" y="8.9" font-size="9.8" text-anchor="middle" font-family="Liberation Sans" fill="#1a1a1a">69</text><line x1="743.5" y1="16" x2="743.5" y2="23" stroke="#555" stroke-width="1"/><text x="742.7" y="8.9" font-size="9.8" text-anchor="middle" font-family="Liberation Sans" fill="#1a1a1a">70</text><line x1="765.5" y1="16" x2="765.5" y2="23" stroke="#555" stroke-width="1"/><text x="765.2" y="8.9" font-size="9.8" text-anchor="middle" font-family="Liberation Sans" fill="#1a1a1a">71</text><line x1="788.5" y1="16" x2="788.5" y2="23" stroke="#555" stroke-width="1"/><text x="787.7" y="8.9" font-size="9.8" text-anchor="middle" font-family="Liberation Sans" fill="#1a1a1a">72</text><line x1="810.5" y1="16" x2="810.5" y2="23" stroke="#555" stroke-width="1"/><text x="810.2" y="8.9" font-size="9.8" text-anchor="middle" font-family="Liberation Sans" fill="#1a1a1a">73</text><line x1="833.5" y1="16" x2="833.5" y2="23" stroke="#555" stroke-width="1"/><text x="832.7" y="8.9" font-size="9.8" text-anchor="middle" font-family="Liberation Sans" fill="#1a1a1a">74</text><line x1="855.5" y1="16" x2="855.5" y2="23" stroke="#555" stroke-width="1"/><text x="855.2" y="8.9" font-size="9.8" text-anchor="middle" font-family="Liberation Sans" fill="#1a1a1a">75</text><line x1="878.5" y1="16" x2="878.5" y2="23" stroke="#555" stroke-width="1"/><text x="877.7" y="8.9" font-size="9.8" text-anchor="middle" font-family="Liberation Sans" fill="#1a1a1a">76</text><line x1="900.5" y1="16" x2="900.5" y2="23" stroke="#555" stroke-width="1"/><text x="900.2" y="8.9" font-size="9.8" text-anchor="middle" font-family="Liberation Sans" fill="#1a1a1a">77</text><line x1="923.5" y1="16" x2="923.5" y2="23" stroke="#555" stroke-width="1"/><text x="922.7" y="8.9" font-size="9.8" text-anchor="middle" font-family="Liberation Sans" fill="#1a1a1a">78</text><line x1="945.5" y1="16" x2="945.5" y2="23" stroke="#555" stroke-width="1"/><text x="945.2" y="8.9" font-size="9.8" text-anchor="middle" font-family="Liberation Sans" fill="#1a1a1a">79</text><line x1="968.5" y1="16" x2="968.5" y2="23" stroke="#555" stroke-width="1"/><text x="967.7" y="8.9" font-size="9.8" text-anchor="middle" font-family="Liberation Sans" fill="#1a1a1a">80</text><line x1="990.5" y1="16" x2="990.5" y2="23" stroke="#555" stroke-width="1"/><text x="990.2" y="8.9" font-size="9.8" text-anchor="middle" font-family="Liberation Sans" fill="#1a1a1a">81</text><line x1="1013.5" y1="16" x2="1013.5" y2="23" stroke="#555" stroke-width="1"/><text x="1012.7" y="8.9" font-size="9.8" text-anchor="middle" font-family="Liberation Sans" fill="#1a1a1a">82</text><line x1="1035.5" y1="16" x2="1035.5" y2="23" stroke="#555" stroke-width="1"/><text x="1035.2" y="8.9" font-size="9.8" text-anchor="middle" font-family="Liberation Sans" fill="#1a1a1a">83</text><line x1="1058.5" y1="16" x2="1058.5" y2="23" stroke="#555" stroke-width="1"/><text x="1057.7" y="8.9" font-size="9.8" text-anchor="middle" font-family="Liberation Sans" fill="#1a1a1a">84</text></g><path d="M535.6 13.3 L547 13.3 L541.2 18.6 Z" fill="#000"/><path d="M540.5 18 V23" stroke="#555"/></svg></div>
<div id="vruler" class="a"><svg width="23" height="591" style="position:absolute;left:0;top:0"><defs><clipPath id="vrc0"><rect x="0" y="0" width="23" height="577"/></clipPath></defs><g clip-path="url(#vrc0)"><line x1="16" y1="577.5" x2="23" y2="577.5" stroke="#555" stroke-width="1"/><text transform="translate(9.7,577.0) rotate(-90)" x="0" y="0" font-size="9.6" text-anchor="middle" font-family="Liberation Sans" fill="#1a1a1a">-8</text><line x1="16" y1="554.5" x2="23" y2="554.5" stroke="#555" stroke-width="1"/><text transform="translate(9.7,554.5) rotate(-90)" x="0" y="0" font-size="9.6" text-anchor="middle" font-family="Liberation Sans" fill="#1a1a1a">-7</text><line x1="16" y1="532.5" x2="23" y2="532.5" stroke="#555" stroke-width="1"/><text transform="translate(9.7,532.0) rotate(-90)" x="0" y="0" font-size="9.6" text-anchor="middle" font-family="Liberation Sans" fill="#1a1a1a">-6</text><line x1="16" y1="509.5" x2="23" y2="509.5" stroke="#555" stroke-width="1"/><text transform="translate(9.7,509.5) rotate(-90)" x="0" y="0" font-size="9.6" text-anchor="middle" font-family="Liberation Sans" fill="#1a1a1a">-5</text><line x1="16" y1="487.5" x2="23" y2="487.5" stroke="#555" stroke-width="1"/><text transform="translate(9.7,487.0) rotate(-90)" x="0" y="0" font-size="9.6" text-anchor="middle" font-family="Liberation Sans" fill="#1a1a1a">-4</text><line x1="16" y1="464.5" x2="23" y2="464.5" stroke="#555" stroke-width="1"/><text transform="translate(9.7,464.5) rotate(-90)" x="0" y="0" font-size="9.6" text-anchor="middle" font-family="Liberation Sans" fill="#1a1a1a">-3</text><line x1="16" y1="442.5" x2="23" y2="442.5" stroke="#555" stroke-width="1"/><text transform="translate(9.7,442.0) rotate(-90)" x="0" y="0" font-size="9.6" text-anchor="middle" font-family="Liberation Sans" fill="#1a1a1a">-2</text><line x1="16" y1="419.5" x2="23" y2="419.5" stroke="#555" stroke-width="1"/><text transform="translate(9.7,419.5) rotate(-90)" x="0" y="0" font-size="9.6" text-anchor="middle" font-family="Liberation Sans" fill="#1a1a1a">-1</text><line x1="16" y1="397.5" x2="23" y2="397.5" stroke="#555" stroke-width="1"/><text transform="translate(9.7,397.0) rotate(-90)" x="0" y="0" font-size="9.6" text-anchor="middle" font-family="Liberation Sans" fill="#1a1a1a">0</text><line x1="16" y1="374.5" x2="23" y2="374.5" stroke="#555" stroke-width="1"/><text transform="translate(9.7,374.5) rotate(-90)" x="0" y="0" font-size="9.6" text-anchor="middle" font-family="Liberation Sans" fill="#1a1a1a">1</text><line x1="16" y1="352.5" x2="23" y2="352.5" stroke="#555" stroke-width="1"/><text transform="translate(9.7,352.0) rotate(-90)" x="0" y="0" font-size="9.6" text-anchor="middle" font-family="Liberation Sans" fill="#1a1a1a">2</text><line x1="16" y1="329.5" x2="23" y2="329.5" stroke="#555" stroke-width="1"/><text transform="translate(9.7,329.5) rotate(-90)" x="0" y="0" font-size="9.6" text-anchor="middle" font-family="Liberation Sans" fill="#1a1a1a">3</text><line x1="16" y1="307.5" x2="23" y2="307.5" stroke="#555" stroke-width="1"/><text transform="translate(9.7,307.0) rotate(-90)" x="0" y="0" font-size="9.6" text-anchor="middle" font-family="Liberation Sans" fill="#1a1a1a">4</text><line x1="16" y1="284.5" x2="23" y2="284.5" stroke="#555" stroke-width="1"/><text transform="translate(9.7,284.5) rotate(-90)" x="0" y="0" font-size="9.6" text-anchor="middle" font-family="Liberation Sans" fill="#1a1a1a">5</text><line x1="16" y1="262.5" x2="23" y2="262.5" stroke="#555" stroke-width="1"/><text transform="translate(9.7,262.0) rotate(-90)" x="0" y="0" font-size="9.6" text-anchor="middle" font-family="Liberation Sans" fill="#1a1a1a">6</text><line x1="16" y1="239.5" x2="23" y2="239.5" stroke="#555" stroke-width="1"/><text transform="translate(9.7,239.5) rotate(-90)" x="0" y="0" font-size="9.6" text-anchor="middle" font-family="Liberation Sans" fill="#1a1a1a">7</text><line x1="16" y1="217.5" x2="23" y2="217.5" stroke="#555" stroke-width="1"/><text transform="translate(9.7,217.0) rotate(-90)" x="0" y="0" font-size="9.6" text-anchor="middle" font-family="Liberation Sans" fill="#1a1a1a">8</text><line x1="16" y1="194.5" x2="23" y2="194.5" stroke="#555" stroke-width="1"/><text transform="translate(9.7,194.5) rotate(-90)" x="0" y="0" font-size="9.6" text-anchor="middle" font-family="Liberation Sans" fill="#1a1a1a">9</text><line x1="16" y1="172.5" x2="23" y2="172.5" stroke="#555" stroke-width="1"/><text transform="translate(9.7,172.0) rotate(-90)" x="0" y="0" font-size="9.6" text-anchor="middle" font-family="Liberation Sans" fill="#1a1a1a">10</text><line x1="16" y1="149.5" x2="23" y2="149.5" stroke="#555" stroke-width="1"/><text transform="translate(9.7,149.5) rotate(-90)" x="0" y="0" font-size="9.6" text-anchor="middle" font-family="Liberation Sans" fill="#1a1a1a">11</text><line x1="16" y1="127.5" x2="23" y2="127.5" stroke="#555" stroke-width="1"/><text transform="translate(9.7,127.0) rotate(-90)" x="0" y="0" font-size="9.6" text-anchor="middle" font-family="Liberation Sans" fill="#1a1a1a">12</text><line x1="16" y1="104.5" x2="23" y2="104.5" stroke="#555" stroke-width="1"/><text transform="translate(9.7,104.5) rotate(-90)" x="0" y="0" font-size="9.6" text-anchor="middle" font-family="Liberation Sans" fill="#1a1a1a">13</text><line x1="16" y1="82.5" x2="23" y2="82.5" stroke="#555" stroke-width="1"/><text transform="translate(9.7,82.0) rotate(-90)" x="0" y="0" font-size="9.6" text-anchor="middle" font-family="Liberation Sans" fill="#1a1a1a">14</text><line x1="16" y1="59.5" x2="23" y2="59.5" stroke="#555" stroke-width="1"/><text transform="translate(9.7,59.5) rotate(-90)" x="0" y="0" font-size="9.6" text-anchor="middle" font-family="Liberation Sans" fill="#1a1a1a">15</text><line x1="16" y1="37.5" x2="23" y2="37.5" stroke="#555" stroke-width="1"/><text transform="translate(9.7,37.0) rotate(-90)" x="0" y="0" font-size="9.6" text-anchor="middle" font-family="Liberation Sans" fill="#1a1a1a">16</text><line x1="16" y1="14.5" x2="23" y2="14.5" stroke="#555" stroke-width="1"/><text transform="translate(9.7,14.5) rotate(-90)" x="0" y="0" font-size="9.6" text-anchor="middle" font-family="Liberation Sans" fill="#1a1a1a">17</text></g><path d="M13.2 61 L13.2 72.8 L19 66.9 Z" fill="#000"/></svg></div>
<div id="canvas" class="a"><svg width="1044" height="577" style="position:absolute;left:0;top:0">
<line x1="45.0" y1="0" x2="45.0" y2="577" stroke="#121212" stroke-width="1.5"/>
<line x1="270.0" y1="0" x2="270.0" y2="577" stroke="#121212" stroke-width="1.5"/>
<line x1="495.0" y1="0" x2="495.0" y2="577" stroke="#121212" stroke-width="1.5"/>
<line x1="720.0" y1="0" x2="720.0" y2="577" stroke="#121212" stroke-width="1.5"/>
<line x1="945.0" y1="0" x2="945.0" y2="577" stroke="#121212" stroke-width="1.5"/>
<line x1="0" y1="397.0" x2="1044" y2="397.0" stroke="#121212" stroke-width="1.5"/>
<line x1="0" y1="172.0" x2="1044" y2="172.0" stroke="#121212" stroke-width="1.5"/>
<path d="M22 554h1v1h-1zM22 532h1v1h-1zM22 509h1v1h-1zM22 487h1v1h-1zM22 464h1v1h-1zM22 442h1v1h-1zM22 419h1v1h-1zM22 397h1v1h-1zM22 374h1v1h-1zM22 352h1v1h-1zM22 329h1v1h-1zM22 307h1v1h-1zM22 284h1v1h-1zM22 262h1v1h-1zM22 239h1v1h-1zM22 217h1v1h-1zM22 194h1v1h-1zM22 172h1v1h-1zM22 149h1v1h-1zM22 127h1v1h-1zM22 104h1v1h-1zM22 82h1v1h-1zM22 59h1v1h-1zM22 37h1v1h-1zM22 14h1v1h-1zM45 554h1v1h-1zM45 532h1v1h-1zM45 509h1v1h-1zM45 487h1v1h-1zM45 464h1v1h-1zM45 442h1v1h-1zM45 419h1v1h-1zM45 397h1v1h-1zM45 374h1v1h-1zM45 352h1v1h-1zM45 329h1v1h-1zM45 307h1v1h-1zM45 284h1v1h-1zM45 262h1v1h-1zM45 239h1v1h-1zM45 217h1v1h-1zM45 194h1v1h-1zM45 172h1v1h-1zM45 149h1v1h-1zM45 127h1v1h-1zM45 104h1v1h-1zM45 82h1v1h-1zM45 59h1v1h-1zM45 37h1v1h-1zM45 14h1v1h-1zM67 554h1v1h-1zM67 532h1v1h-1zM67 509h1v1h-1zM67 487h1v1h-1zM67 464h1v1h-1zM67 442h1v1h-1zM67 419h1v1h-1zM67 397h1v1h-1zM67 374h1v1h-1zM67 352h1v1h-1zM67 329h1v1h-1zM67 307h1v1h-1zM67 284h1v1h-1zM67 262h1v1h-1zM67 239h1v1h-1zM67 217h1v1h-1zM67 194h1v1h-1zM67 172h1v1h-1zM67 149h1v1h-1zM67 127h1v1h-1zM67 104h1v1h-1zM67 82h1v1h-1zM67 59h1v1h-1zM67 37h1v1h-1zM67 14h1v1h-1zM90 554h1v1h-1zM90 532h1v1h-1zM90 509h1v1h-1zM90 487h1v1h-1zM90 464h1v1h-1zM90 442h1v1h-1zM90 419h1v1h-1zM90 397h1v1h-1zM90 374h1v1h-1zM90 352h1v1h-1zM90 329h1v1h-1zM90 307h1v1h-1zM90 284h1v1h-1zM90 262h1v1h-1zM90 239h1v1h-1zM90 217h1v1h-1zM90 194h1v1h-1zM90 172h1v1h-1zM90 149h1v1h-1zM90 127h1v1h-1zM90 104h1v1h-1zM90 82h1v1h-1zM90 59h1v1h-1zM90 37h1v1h-1zM90 14h1v1h-1zM112 554h1v1h-1zM112 532h1v1h-1zM112 509h1v1h-1zM112 487h1v1h-1zM112 464h1v1h-1zM112 442h1v1h-1zM112 419h1v1h-1zM112 397h1v1h-1zM112 374h1v1h-1zM112 352h1v1h-1zM112 329h1v1h-1zM112 307h1v1h-1zM112 284h1v1h-1zM112 262h1v1h-1zM112 239h1v1h-1zM112 217h1v1h-1zM112 194h1v1h-1zM112 172h1v1h-1zM112 149h1v1h-1zM112 127h1v1h-1zM112 104h1v1h-1zM112 82h1v1h-1zM112 59h1v1h-1zM112 37h1v1h-1zM112 14h1v1h-1zM135 554h1v1h-1zM135 532h1v1h-1zM135 509h1v1h-1zM135 487h1v1h-1zM135 464h1v1h-1zM135 442h1v1h-1zM135 419h1v1h-1zM135 397h1v1h-1zM135 374h1v1h-1zM135 352h1v1h-1zM135 329h1v1h-1zM135 307h1v1h-1zM135 284h1v1h-1zM135 262h1v1h-1zM135 239h1v1h-1zM135 217h1v1h-1zM135 194h1v1h-1zM135 172h1v1h-1zM135 149h1v1h-1zM135 127h1v1h-1zM135 104h1v1h-1zM135 82h1v1h-1zM135 59h1v1h-1zM135 37h1v1h-1zM135 14h1v1h-1zM157 554h1v1h-1zM157 532h1v1h-1zM157 509h1v1h-1zM157 487h1v1h-1zM157 464h1v1h-1zM157 442h1v1h-1zM157 419h1v1h-1zM157 397h1v1h-1zM157 374h1v1h-1zM157 352h1v1h-1zM157 329h1v1h-1zM157 307h1v1h-1zM157 284h1v1h-1zM157 262h1v1h-1zM157 239h1v1h-1zM157 217h1v1h-1zM157 194h1v1h-1zM157 172h1v1h-1zM157 149h1v1h-1zM157 127h1v1h-1zM157 104h1v1h-1zM157 82h1v1h-1zM157 59h1v1h-1zM157 37h1v1h-1zM157 14h1v1h-1zM180 554h1v1h-1zM180 532h1v1h-1zM180 509h1v1h-1zM180 487h1v1h-1zM180 464h1v1h-1zM180 442h1v1h-1zM180 419h1v1h-1zM180 397h1v1h-1zM180 374h1v1h-1zM180 352h1v1h-1zM180 329h1v1h-1zM180 307h1v1h-1zM180 284h1v1h-1zM180 262h1v1h-1zM180 239h1v1h-1zM180 217h1v1h-1zM180 194h1v1h-1zM180 172h1v1h-1zM180 149h1v1h-1zM180 127h1v1h-1zM180 104h1v1h-1zM180 82h1v1h-1zM180 59h1v1h-1zM180 37h1v1h-1zM180 14h1v1h-1zM202 554h1v1h-1zM202 532h1v1h-1zM202 509h1v1h-1zM202 487h1v1h-1zM202 464h1v1h-1zM202 442h1v1h-1zM202 419h1v1h-1zM202 397h1v1h-1zM202 374h1v1h-1zM202 352h1v1h-1zM202 329h1v1h-1zM202 307h1v1h-1zM202 284h1v1h-1zM202 262h1v1h-1zM202 239h1v1h-1zM202 217h1v1h-1zM202 194h1v1h-1zM202 172h1v1h-1zM202 149h1v1h-1zM202 127h1v1h-1zM202 104h1v1h-1zM202 82h1v1h-1zM202 59h1v1h-1zM202 37h1v1h-1zM202 14h1v1h-1zM225 554h1v1h-1zM225 532h1v1h-1zM225 509h1v1h-1zM225 487h1v1h-1zM225 464h1v1h-1zM225 442h1v1h-1zM225 419h1v1h-1zM225 397h1v1h-1zM225 374h1v1h-1zM225 352h1v1h-1zM225 329h1v1h-1zM225 307h1v1h-1zM225 284h1v1h-1zM225 262h1v1h-1zM225 239h1v1h-1zM225 217h1v1h-1zM225 194h1v1h-1zM225 172h1v1h-1zM225 149h1v1h-1zM225 127h1v1h-1zM225 104h1v1h-1zM225 82h1v1h-1zM225 59h1v1h-1zM225 37h1v1h-1zM225 14h1v1h-1zM247 554h1v1h-1zM247 532h1v1h-1zM247 509h1v1h-1zM247 487h1v1h-1zM247 464h1v1h-1zM247 442h1v1h-1zM247 419h1v1h-1zM247 397h1v1h-1zM247 374h1v1h-1zM247 352h1v1h-1zM247 329h1v1h-1zM247 307h1v1h-1zM247 284h1v1h-1zM247 262h1v1h-1zM247 239h1v1h-1zM247 217h1v1h-1zM247 194h1v1h-1zM247 172h1v1h-1zM247 149h1v1h-1zM247 127h1v1h-1zM247 104h1v1h-1zM247 82h1v1h-1zM247 59h1v1h-1zM247 37h1v1h-1zM247 14h1v1h-1zM270 554h1v1h-1zM270 532h1v1h-1zM270 509h1v1h-1zM270 487h1v1h-1zM270 464h1v1h-1zM270 442h1v1h-1zM270 419h1v1h-1zM270 397h1v1h-1zM270 374h1v1h-1zM270 352h1v1h-1zM270 329h1v1h-1zM270 307h1v1h-1zM270 284h1v1h-1zM270 262h1v1h-1zM270 239h1v1h-1zM270 217h1v1h-1zM270 194h1v1h-1zM270 172h1v1h-1zM270 149h1v1h-1zM270 127h1v1h-1zM270 104h1v1h-1zM270 82h1v1h-1zM270 59h1v1h-1zM270 37h1v1h-1zM270 14h1v1h-1zM292 554h1v1h-1zM292 532h1v1h-1zM292 509h1v1h-1zM292 487h1v1h-1zM292 464h1v1h-1zM292 442h1v1h-1zM292 419h1v1h-1zM292 397h1v1h-1zM292 374h1v1h-1zM292 352h1v1h-1zM292 329h1v1h-1zM292 307h1v1h-1zM292 284h1v1h-1zM292 262h1v1h-1zM292 239h1v1h-1zM292 217h1v1h-1zM292 194h1v1h-1zM292 172h1v1h-1zM292 149h1v1h-1zM292 127h1v1h-1zM292 104h1v1h-1zM292 82h1v1h-1zM292 59h1v1h-1zM292 37h1v1h-1zM292 14h1v1h-1zM315 554h1v1h-1zM315 532h1v1h-1zM315 509h1v1h-1zM315 487h1v1h-1zM315 464h1v1h-1zM315 442h1v1h-1zM315 419h1v1h-1zM315 397h1v1h-1zM315 374h1v1h-1zM315 352h1v1h-1zM315 329h1v1h-1zM315 307h1v1h-1zM315 284h1v1h-1zM315 262h1v1h-1zM315 239h1v1h-1zM315 217h1v1h-1zM315 194h1v1h-1zM315 172h1v1h-1zM315 149h1v1h-1zM315 127h1v1h-1zM315 104h1v1h-1zM315 82h1v1h-1zM315 59h1v1h-1zM315 37h1v1h-1zM315 14h1v1h-1zM337 554h1v1h-1zM337 532h1v1h-1zM337 509h1v1h-1zM337 487h1v1h-1zM337 464h1v1h-1zM337 442h1v1h-1zM337 419h1v1h-1zM337 397h1v1h-1zM337 374h1v1h-1zM337 352h1v1h-1zM337 329h1v1h-1zM337 307h1v1h-1zM337 284h1v1h-1zM337 262h1v1h-1zM337 239h1v1h-1zM337 217h1v1h-1zM337 194h1v1h-1zM337 172h1v1h-1zM337 149h1v1h-1zM337 127h1v1h-1zM337 104h1v1h-1zM337 82h1v1h-1zM337 59h1v1h-1zM337 37h1v1h-1zM337 14h1v1h-1zM360 554h1v1h-1zM360 532h1v1h-1zM360 509h1v1h-1zM360 487h1v1h-1zM360 464h1v1h-1zM360 442h1v1h-1zM360 419h1v1h-1zM360 397h1v1h-1zM360 374h1v1h-1zM360 352h1v1h-1zM360 329h1v1h-1zM360 307h1v1h-1zM360 284h1v1h-1zM360 262h1v1h-1zM360 239h1v1h-1zM360 217h1v1h-1zM360 194h1v1h-1zM360 172h1v1h-1zM360 149h1v1h-1zM360 127h1v1h-1zM360 104h1v1h-1zM360 82h1v1h-1zM360 59h1v1h-1zM360 37h1v1h-1zM360 14h1v1h-1zM382 554h1v1h-1zM382 532h1v1h-1zM382 509h1v1h-1zM382 487h1v1h-1zM382 464h1v1h-1zM382 442h1v1h-1zM382 419h1v1h-1zM382 397h1v1h-1zM382 374h1v1h-1zM382 352h1v1h-1zM382 329h1v1h-1zM382 307h1v1h-1zM382 284h1v1h-1zM382 262h1v1h-1zM382 239h1v1h-1zM382 217h1v1h-1zM382 194h1v1h-1zM382 172h1v1h-1zM382 149h1v1h-1zM382 127h1v1h-1zM382 104h1v1h-1zM382 82h1v1h-1zM382 59h1v1h-1zM382 37h1v1h-1zM382 14h1v1h-1zM405 554h1v1h-1zM405 532h1v1h-1zM405 509h1v1h-1zM405 487h1v1h-1zM405 464h1v1h-1zM405 442h1v1h-1zM405 419h1v1h-1zM405 397h1v1h-1zM405 374h1v1h-1zM405 352h1v1h-1zM405 329h1v1h-1zM405 307h1v1h-1zM405 284h1v1h-1zM405 262h1v1h-1zM405 239h1v1h-1zM405 217h1v1h-1zM405 194h1v1h-1zM405 172h1v1h-1zM405 149h1v1h-1zM405 127h1v1h-1zM405 104h1v1h-1zM405 82h1v1h-1zM405 59h1v1h-1zM405 37h1v1h-1zM405 14h1v1h-1zM427 554h1v1h-1zM427 532h1v1h-1zM427 509h1v1h-1zM427 487h1v1h-1zM427 464h1v1h-1zM427 442h1v1h-1zM427 419h1v1h-1zM427 397h1v1h-1zM427 374h1v1h-1zM427 352h1v1h-1zM427 329h1v1h-1zM427 307h1v1h-1zM427 284h1v1h-1zM427 262h1v1h-1zM427 239h1v1h-1zM427 217h1v1h-1zM427 194h1v1h-1zM427 172h1v1h-1zM427 149h1v1h-1zM427 127h1v1h-1zM427 104h1v1h-1zM427 82h1v1h-1zM427 59h1v1h-1zM427 37h1v1h-1zM427 14h1v1h-1zM450 554h1v1h-1zM450 532h1v1h-1zM450 509h1v1h-1zM450 487h1v1h-1zM450 464h1v1h-1zM450 442h1v1h-1zM450 419h1v1h-1zM450 397h1v1h-1zM450 374h1v1h-1zM450 352h1v1h-1zM450 329h1v1h-1zM450 307h1v1h-1zM450 284h1v1h-1zM450 262h1v1h-1zM450 239h1v1h-1zM450 217h1v1h-1zM450 194h1v1h-1zM450 172h1v1h-1zM450 149h1v1h-1zM450 127h1v1h-1zM450 104h1v1h-1zM450 82h1v1h-1zM450 59h1v1h-1zM450 37h1v1h-1zM450 14h1v1h-1zM472 554h1v1h-1zM472 532h1v1h-1zM472 509h1v1h-1zM472 487h1v1h-1zM472 464h1v1h-1zM472 442h1v1h-1zM472 419h1v1h-1zM472 397h1v1h-1zM472 374h1v1h-1zM472 352h1v1h-1zM472 329h1v1h-1zM472 307h1v1h-1zM472 284h1v1h-1zM472 262h1v1h-1zM472 239h1v1h-1zM472 217h1v1h-1zM472 194h1v1h-1zM472 172h1v1h-1zM472 149h1v1h-1zM472 127h1v1h-1zM472 104h1v1h-1zM472 82h1v1h-1zM472 59h1v1h-1zM472 37h1v1h-1zM472 14h1v1h-1zM495 554h1v1h-1zM495 532h1v1h-1zM495 509h1v1h-1zM495 487h1v1h-1zM495 464h1v1h-1zM495 442h1v1h-1zM495 419h1v1h-1zM495 397h1v1h-1zM495 374h1v1h-1zM495 352h1v1h-1zM495 329h1v1h-1zM495 307h1v1h-1zM495 284h1v1h-1zM495 262h1v1h-1zM495 239h1v1h-1zM495 217h1v1h-1zM495 194h1v1h-1zM495 172h1v1h-1zM495 149h1v1h-1zM495 127h1v1h-1zM495 104h1v1h-1zM495 82h1v1h-1zM495 59h1v1h-1zM495 37h1v1h-1zM495 14h1v1h-1zM517 554h1v1h-1zM517 532h1v1h-1zM517 509h1v1h-1zM517 487h1v1h-1zM517 464h1v1h-1zM517 442h1v1h-1zM517 419h1v1h-1zM517 397h1v1h-1zM517 374h1v1h-1zM517 352h1v1h-1zM517 329h1v1h-1zM517 307h1v1h-1zM517 284h1v1h-1zM517 262h1v1h-1zM517 239h1v1h-1zM517 217h1v1h-1zM517 194h1v1h-1zM517 172h1v1h-1zM517 149h1v1h-1zM517 127h1v1h-1zM517 104h1v1h-1zM517 82h1v1h-1zM517 59h1v1h-1zM517 37h1v1h-1zM517 14h1v1h-1zM540 554h1v1h-1zM540 532h1v1h-1zM540 509h1v1h-1zM540 487h1v1h-1zM540 464h1v1h-1zM540 442h1v1h-1zM540 419h1v1h-1zM540 397h1v1h-1zM540 374h1v1h-1zM540 352h1v1h-1zM540 329h1v1h-1zM540 307h1v1h-1zM540 284h1v1h-1zM540 262h1v1h-1zM540 239h1v1h-1zM540 217h1v1h-1zM540 194h1v1h-1zM540 172h1v1h-1zM540 149h1v1h-1zM540 127h1v1h-1zM540 104h1v1h-1zM540 82h1v1h-1zM540 59h1v1h-1zM540 37h1v1h-1zM540 14h1v1h-1zM562 554h1v1h-1zM562 532h1v1h-1zM562 509h1v1h-1zM562 487h1v1h-1zM562 464h1v1h-1zM562 442h1v1h-1zM562 419h1v1h-1zM562 397h1v1h-1zM562 374h1v1h-1zM562 352h1v1h-1zM562 329h1v1h-1zM562 307h1v1h-1zM562 284h1v1h-1zM562 262h1v1h-1zM562 239h1v1h-1zM562 217h1v1h-1zM562 194h1v1h-1zM562 172h1v1h-1zM562 149h1v1h-1zM562 127h1v1h-1zM562 104h1v1h-1zM562 82h1v1h-1zM562 59h1v1h-1zM562 37h1v1h-1zM562 14h1v1h-1zM585 554h1v1h-1zM585 532h1v1h-1zM585 509h1v1h-1zM585 487h1v1h-1zM585 464h1v1h-1zM585 442h1v1h-1zM585 419h1v1h-1zM585 397h1v1h-1zM585 374h1v1h-1zM585 352h1v1h-1zM585 329h1v1h-1zM585 307h1v1h-1zM585 284h1v1h-1zM585 262h1v1h-1zM585 239h1v1h-1zM585 217h1v1h-1zM585 194h1v1h-1zM585 172h1v1h-1zM585 149h1v1h-1zM585 127h1v1h-1zM585 104h1v1h-1zM585 82h1v1h-1zM585 59h1v1h-1zM585 37h1v1h-1zM585 14h1v1h-1zM607 554h1v1h-1zM607 532h1v1h-1zM607 509h1v1h-1zM607 487h1v1h-1zM607 464h1v1h-1zM607 442h1v1h-1zM607 419h1v1h-1zM607 397h1v1h-1zM607 374h1v1h-1zM607 352h1v1h-1zM607 329h1v1h-1zM607 307h1v1h-1zM607 284h1v1h-1zM607 262h1v1h-1zM607 239h1v1h-1zM607 217h1v1h-1zM607 194h1v1h-1zM607 172h1v1h-1zM607 149h1v1h-1zM607 127h1v1h-1zM607 104h1v1h-1zM607 82h1v1h-1zM607 59h1v1h-1zM607 37h1v1h-1zM607 14h1v1h-1zM630 554h1v1h-1zM630 532h1v1h-1zM630 509h1v1h-1zM630 487h1v1h-1zM630 464h1v1h-1zM630 442h1v1h-1zM630 419h1v1h-1zM630 397h1v1h-1zM630 374h1v1h-1zM630 352h1v1h-1zM630 329h1v1h-1zM630 307h1v1h-1zM630 284h1v1h-1zM630 262h1v1h-1zM630 239h1v1h-1zM630 217h1v1h-1zM630 194h1v1h-1zM630 172h1v1h-1zM630 149h1v1h-1zM630 127h1v1h-1zM630 104h1v1h-1zM630 82h1v1h-1zM630 59h1v1h-1zM630 37h1v1h-1zM630 14h1v1h-1zM652 554h1v1h-1zM652 532h1v1h-1zM652 509h1v1h-1zM652 487h1v1h-1zM652 464h1v1h-1zM652 442h1v1h-1zM652 419h1v1h-1zM652 397h1v1h-1zM652 374h1v1h-1zM652 352h1v1h-1zM652 329h1v1h-1zM652 307h1v1h-1zM652 284h1v1h-1zM652 262h1v1h-1zM652 239h1v1h-1zM652 217h1v1h-1zM652 194h1v1h-1zM652 172h1v1h-1zM652 149h1v1h-1zM652 127h1v1h-1zM652 104h1v1h-1zM652 82h1v1h-1zM652 59h1v1h-1zM652 37h1v1h-1zM652 14h1v1h-1zM675 554h1v1h-1zM675 532h1v1h-1zM675 509h1v1h-1zM675 487h1v1h-1zM675 464h1v1h-1zM675 442h1v1h-1zM675 419h1v1h-1zM675 397h1v1h-1zM675 374h1v1h-1zM675 352h1v1h-1zM675 329h1v1h-1zM675 307h1v1h-1zM675 284h1v1h-1zM675 262h1v1h-1zM675 239h1v1h-1zM675 217h1v1h-1zM675 194h1v1h-1zM675 172h1v1h-1zM675 149h1v1h-1zM675 127h1v1h-1zM675 104h1v1h-1zM675 82h1v1h-1zM675 59h1v1h-1zM675 37h1v1h-1zM675 14h1v1h-1zM697 554h1v1h-1zM697 532h1v1h-1zM697 509h1v1h-1zM697 487h1v1h-1zM697 464h1v1h-1zM697 442h1v1h-1zM697 419h1v1h-1zM697 397h1v1h-1zM697 374h1v1h-1zM697 352h1v1h-1zM697 329h1v1h-1zM697 307h1v1h-1zM697 284h1v1h-1zM697 262h1v1h-1zM697 239h1v1h-1zM697 217h1v1h-1zM697 194h1v1h-1zM697 172h1v1h-1zM697 149h1v1h-1zM697 127h1v1h-1zM697 104h1v1h-1zM697 82h1v1h-1zM697 59h1v1h-1zM697 37h1v1h-1zM697 14h1v1h-1zM720 554h1v1h-1zM720 532h1v1h-1zM720 509h1v1h-1zM720 487h1v1h-1zM720 464h1v1h-1zM720 442h1v1h-1zM720 419h1v1h-1zM720 397h1v1h-1zM720 374h1v1h-1zM720 352h1v1h-1zM720 329h1v1h-1zM720 307h1v1h-1zM720 284h1v1h-1zM720 262h1v1h-1zM720 239h1v1h-1zM720 217h1v1h-1zM720 194h1v1h-1zM720 172h1v1h-1zM720 149h1v1h-1zM720 127h1v1h-1zM720 104h1v1h-1zM720 82h1v1h-1zM720 59h1v1h-1zM720 37h1v1h-1zM720 14h1v1h-1zM742 554h1v1h-1zM742 532h1v1h-1zM742 509h1v1h-1zM742 487h1v1h-1zM742 464h1v1h-1zM742 442h1v1h-1zM742 419h1v1h-1zM742 397h1v1h-1zM742 374h1v1h-1zM742 352h1v1h-1zM742 329h1v1h-1zM742 307h1v1h-1zM742 284h1v1h-1zM742 262h1v1h-1zM742 239h1v1h-1zM742 217h1v1h-1zM742 194h1v1h-1zM742 172h1v1h-1zM742 149h1v1h-1zM742 127h1v1h-1zM742 104h1v1h-1zM742 82h1v1h-1zM742 59h1v1h-1zM742 37h1v1h-1zM742 14h1v1h-1zM765 554h1v1h-1zM765 532h1v1h-1zM765 509h1v1h-1zM765 487h1v1h-1zM765 464h1v1h-1zM765 442h1v1h-1zM765 419h1v1h-1zM765 397h1v1h-1zM765 374h1v1h-1zM765 352h1v1h-1zM765 329h1v1h-1zM765 307h1v1h-1zM765 284h1v1h-1zM765 262h1v1h-1zM765 239h1v1h-1zM765 217h1v1h-1zM765 194h1v1h-1zM765 172h1v1h-1zM765 149h1v1h-1zM765 127h1v1h-1zM765 104h1v1h-1zM765 82h1v1h-1zM765 59h1v1h-1zM765 37h1v1h-1zM765 14h1v1h-1zM787 554h1v1h-1zM787 532h1v1h-1zM787 509h1v1h-1zM787 487h1v1h-1zM787 464h1v1h-1zM787 442h1v1h-1zM787 419h1v1h-1zM787 397h1v1h-1zM787 374h1v1h-1zM787 352h1v1h-1zM787 329h1v1h-1zM787 307h1v1h-1zM787 284h1v1h-1zM787 262h1v1h-1zM787 239h1v1h-1zM787 217h1v1h-1zM787 194h1v1h-1zM787 172h1v1h-1zM787 149h1v1h-1zM787 127h1v1h-1zM787 104h1v1h-1zM787 82h1v1h-1zM787 59h1v1h-1zM787 37h1v1h-1zM787 14h1v1h-1zM810 554h1v1h-1zM810 532h1v1h-1zM810 509h1v1h-1zM810 487h1v1h-1zM810 464h1v1h-1zM810 442h1v1h-1zM810 419h1v1h-1zM810 397h1v1h-1zM810 374h1v1h-1zM810 352h1v1h-1zM810 329h1v1h-1zM810 307h1v1h-1zM810 284h1v1h-1zM810 262h1v1h-1zM810 239h1v1h-1zM810 217h1v1h-1zM810 194h1v1h-1zM810 172h1v1h-1zM810 149h1v1h-1zM810 127h1v1h-1zM810 104h1v1h-1zM810 82h1v1h-1zM810 59h1v1h-1zM810 37h1v1h-1zM810 14h1v1h-1zM832 554h1v1h-1zM832 532h1v1h-1zM832 509h1v1h-1zM832 487h1v1h-1zM832 464h1v1h-1zM832 442h1v1h-1zM832 419h1v1h-1zM832 397h1v1h-1zM832 374h1v1h-1zM832 352h1v1h-1zM832 329h1v1h-1zM832 307h1v1h-1zM832 284h1v1h-1zM832 262h1v1h-1zM832 239h1v1h-1zM832 217h1v1h-1zM832 194h1v1h-1zM832 172h1v1h-1zM832 149h1v1h-1zM832 127h1v1h-1zM832 104h1v1h-1zM832 82h1v1h-1zM832 59h1v1h-1zM832 37h1v1h-1zM832 14h1v1h-1zM855 554h1v1h-1zM855 532h1v1h-1zM855 509h1v1h-1zM855 487h1v1h-1zM855 464h1v1h-1zM855 442h1v1h-1zM855 419h1v1h-1zM855 397h1v1h-1zM855 374h1v1h-1zM855 352h1v1h-1zM855 329h1v1h-1zM855 307h1v1h-1zM855 284h1v1h-1zM855 262h1v1h-1zM855 239h1v1h-1zM855 217h1v1h-1zM855 194h1v1h-1zM855 172h1v1h-1zM855 149h1v1h-1zM855 127h1v1h-1zM855 104h1v1h-1zM855 82h1v1h-1zM855 59h1v1h-1zM855 37h1v1h-1zM855 14h1v1h-1zM877 554h1v1h-1zM877 532h1v1h-1zM877 509h1v1h-1zM877 487h1v1h-1zM877 464h1v1h-1zM877 442h1v1h-1zM877 419h1v1h-1zM877 397h1v1h-1zM877 374h1v1h-1zM877 352h1v1h-1zM877 329h1v1h-1zM877 307h1v1h-1zM877 284h1v1h-1zM877 262h1v1h-1zM877 239h1v1h-1zM877 217h1v1h-1zM877 194h1v1h-1zM877 172h1v1h-1zM877 149h1v1h-1zM877 127h1v1h-1zM877 104h1v1h-1zM877 82h1v1h-1zM877 59h1v1h-1zM877 37h1v1h-1zM877 14h1v1h-1zM900 554h1v1h-1zM900 532h1v1h-1zM900 509h1v1h-1zM900 487h1v1h-1zM900 464h1v1h-1zM900 442h1v1h-1zM900 419h1v1h-1zM900 397h1v1h-1zM900 374h1v1h-1zM900 352h1v1h-1zM900 329h1v1h-1zM900 307h1v1h-1zM900 284h1v1h-1zM900 262h1v1h-1zM900 239h1v1h-1zM900 217h1v1h-1zM900 194h1v1h-1zM900 172h1v1h-1zM900 149h1v1h-1zM900 127h1v1h-1zM900 104h1v1h-1zM900 82h1v1h-1zM900 59h1v1h-1zM900 37h1v1h-1zM900 14h1v1h-1zM922 554h1v1h-1zM922 532h1v1h-1zM922 509h1v1h-1zM922 487h1v1h-1zM922 464h1v1h-1zM922 442h1v1h-1zM922 419h1v1h-1zM922 397h1v1h-1zM922 374h1v1h-1zM922 352h1v1h-1zM922 329h1v1h-1zM922 307h1v1h-1zM922 284h1v1h-1zM922 262h1v1h-1zM922 239h1v1h-1zM922 217h1v1h-1zM922 194h1v1h-1zM922 172h1v1h-1zM922 149h1v1h-1zM922 127h1v1h-1zM922 104h1v1h-1zM922 82h1v1h-1zM922 59h1v1h-1zM922 37h1v1h-1zM922 14h1v1h-1zM945 554h1v1h-1zM945 532h1v1h-1zM945 509h1v1h-1zM945 487h1v1h-1zM945 464h1v1h-1zM945 442h1v1h-1zM945 419h1v1h-1zM945 397h1v1h-1zM945 374h1v1h-1zM945 352h1v1h-1zM945 329h1v1h-1zM945 307h1v1h-1zM945 284h1v1h-1zM945 262h1v1h-1zM945 239h1v1h-1zM945 217h1v1h-1zM945 194h1v1h-1zM945 172h1v1h-1zM945 149h1v1h-1zM945 127h1v1h-1zM945 104h1v1h-1zM945 82h1v1h-1zM945 59h1v1h-1zM945 37h1v1h-1zM945 14h1v1h-1zM967 554h1v1h-1zM967 532h1v1h-1zM967 509h1v1h-1zM967 487h1v1h-1zM967 464h1v1h-1zM967 442h1v1h-1zM967 419h1v1h-1zM967 397h1v1h-1zM967 374h1v1h-1zM967 352h1v1h-1zM967 329h1v1h-1zM967 307h1v1h-1zM967 284h1v1h-1zM967 262h1v1h-1zM967 239h1v1h-1zM967 217h1v1h-1zM967 194h1v1h-1zM967 172h1v1h-1zM967 149h1v1h-1zM967 127h1v1h-1zM967 104h1v1h-1zM967 82h1v1h-1zM967 59h1v1h-1zM967 37h1v1h-1zM967 14h1v1h-1zM990 554h1v1h-1zM990 532h1v1h-1zM990 509h1v1h-1zM990 487h1v1h-1zM990 464h1v1h-1zM990 442h1v1h-1zM990 419h1v1h-1zM990 397h1v1h-1zM990 374h1v1h-1zM990 352h1v1h-1zM990 329h1v1h-1zM990 307h1v1h-1zM990 284h1v1h-1zM990 262h1v1h-1zM990 239h1v1h-1zM990 217h1v1h-1zM990 194h1v1h-1zM990 172h1v1h-1zM990 149h1v1h-1zM990 127h1v1h-1zM990 104h1v1h-1zM990 82h1v1h-1zM990 59h1v1h-1zM990 37h1v1h-1zM990 14h1v1h-1zM1012 554h1v1h-1zM1012 532h1v1h-1zM1012 509h1v1h-1zM1012 487h1v1h-1zM1012 464h1v1h-1zM1012 442h1v1h-1zM1012 419h1v1h-1zM1012 397h1v1h-1zM1012 374h1v1h-1zM1012 352h1v1h-1zM1012 329h1v1h-1zM1012 307h1v1h-1zM1012 284h1v1h-1zM1012 262h1v1h-1zM1012 239h1v1h-1zM1012 217h1v1h-1zM1012 194h1v1h-1zM1012 172h1v1h-1zM1012 149h1v1h-1zM1012 127h1v1h-1zM1012 104h1v1h-1zM1012 82h1v1h-1zM1012 59h1v1h-1zM1012 37h1v1h-1zM1012 14h1v1h-1zM1035 554h1v1h-1zM1035 532h1v1h-1zM1035 509h1v1h-1zM1035 487h1v1h-1zM1035 464h1v1h-1zM1035 442h1v1h-1zM1035 419h1v1h-1zM1035 397h1v1h-1zM1035 374h1v1h-1zM1035 352h1v1h-1zM1035 329h1v1h-1zM1035 307h1v1h-1zM1035 284h1v1h-1zM1035 262h1v1h-1zM1035 239h1v1h-1zM1035 217h1v1h-1zM1035 194h1v1h-1zM1035 172h1v1h-1zM1035 149h1v1h-1zM1035 127h1v1h-1zM1035 104h1v1h-1zM1035 82h1v1h-1zM1035 59h1v1h-1zM1035 37h1v1h-1zM1035 14h1v1h-1z" fill="#3a3a3a"/>
<line x1="180.0" y1="397.0" x2="270.0" y2="172.0" stroke="#fff" stroke-width="1.25"/>
<line x1="190.45" y1="401.18" x2="280.45" y2="176.18" stroke="#f00" stroke-width="1.25"/>
<path d="M405.00,172.01 L401.50,172.77 L398.02,173.63 L394.56,174.57 L391.13,175.59 L387.72,176.70 L384.35,177.89 L381.00,179.17 L377.68,180.52 L374.40,181.96 L371.16,183.48 L367.95,185.08 L364.79,186.76 L361.66,188.51 L358.58,190.34 L355.55,192.25 L352.56,194.23 L349.63,196.29 L346.75,198.41 L343.92,200.61 L341.14,202.87 L338.42,205.21 L335.76,207.61 L333.16,210.07 L330.62,212.60 L328.15,215.19 L325.74,217.84 L323.39,220.55 L321.11,223.31 L318.90,226.13 L316.77,229.01 L314.70,231.94 L312.71,234.91 L310.79,237.94 L308.94,241.01 L307.17,244.12 L305.48,247.28 L303.87,250.48 L302.34,253.72 L300.88,257.00 L299.51,260.31 L298.22,263.65 L297.02,267.02 L295.89,270.42 L294.86,273.85 L293.90,277.31 L293.03,280.78 L292.25,284.28 L291.55,287.79 L290.95,291.32 L290.42,294.87 L289.99,298.42 L289.64,301.99 L289.38,305.56 L289.21,309.14 L289.13,312.72 L289.14,316.31 L289.23,319.89 L289.42,323.46 L289.69,327.04 L290.05,330.60 L290.50,334.16 L291.03,337.70 L291.65,341.23 L292.36,344.74 L293.16,348.23 L294.04,351.70 L295.01,355.15 L296.06,358.58 L297.19,361.98 L298.41,365.35 L299.71,368.68 L301.10,371.99 L302.56,375.26 L304.11,378.49 L305.73,381.68 L307.43,384.84 L309.21,387.94 L311.07,391.01 L313.00,394.03 L315.01,397.00" fill="none" stroke="#fff" stroke-width="1.25"/>
<path d="M407.28,183.02 L404.05,183.73 L400.84,184.52 L397.65,185.39 L394.48,186.33 L391.34,187.35 L388.22,188.45 L385.13,189.63 L382.07,190.88 L379.05,192.21 L376.05,193.61 L373.10,195.09 L370.17,196.63 L367.29,198.25 L364.45,199.94 L361.65,201.70 L358.90,203.53 L356.19,205.42 L353.53,207.38 L350.92,209.41 L348.36,211.50 L345.85,213.65 L343.40,215.87 L341.00,218.14 L338.66,220.47 L336.37,222.86 L334.15,225.31 L331.99,227.81 L329.89,230.36 L327.85,232.96 L325.88,235.61 L323.97,238.31 L322.13,241.06 L320.36,243.85 L318.66,246.68 L317.03,249.56 L315.47,252.47 L313.98,255.42 L312.56,258.41 L311.22,261.43 L309.96,264.48 L308.77,267.57 L307.66,270.68 L306.62,273.82 L305.66,276.98 L304.78,280.17 L303.98,283.37 L303.26,286.60 L302.62,289.84 L302.05,293.10 L301.57,296.37 L301.17,299.65 L300.85,302.94 L300.61,306.23 L300.46,309.54 L300.38,312.84 L300.39,316.15 L300.48,319.45 L300.65,322.75 L300.90,326.05 L301.23,329.33 L301.64,332.61 L302.13,335.88 L302.71,339.14 L303.36,342.38 L304.10,345.60 L304.91,348.80 L305.80,351.99 L306.77,355.14 L307.82,358.28 L308.94,361.39 L310.14,364.47 L311.42,367.52 L312.77,370.53 L314.20,373.51 L315.69,376.46 L317.27,379.37 L318.91,382.24 L320.62,385.06 L322.40,387.85 L324.25,390.59" fill="none" stroke="#f00" stroke-width="1.25"/>
<circle cx="517.5" cy="284.5" r="112.5" fill="none" stroke="#fff" stroke-width="1.25"/>
<circle cx="517.5" cy="284.5" r="101.25" fill="none" stroke="#f00" stroke-width="1.25"/>
<ellipse cx="720.0" cy="284.5" rx="36.0" ry="112.5" fill="none" stroke="#fff" stroke-width="1.25"/>
<path d="M744.75,284.50 L744.74,282.60 L744.73,280.70 L744.70,278.80 L744.67,276.90 L744.62,275.01 L744.56,273.12 L744.49,271.23 L744.41,269.35 L744.32,267.47 L744.22,265.60 L744.11,263.73 L743.99,261.87 L743.86,260.02 L743.72,258.18 L743.56,256.34 L743.40,254.52 L743.23,252.70 L743.05,250.90 L742.86,249.11 L742.65,247.32 L742.44,245.56 L742.22,243.80 L741.99,242.06 L741.75,240.33 L741.50,238.62 L741.24,236.92 L740.97,235.24 L740.70,233.57 L740.41,231.92 L740.11,230.29 L739.81,228.68 L739.50,227.09 L739.18,225.52 L738.85,223.96 L738.51,222.43 L738.17,220.92 L737.81,219.43 L737.45,217.97 L737.09,216.52 L736.71,215.10 L736.33,213.71 L735.94,212.34 L735.55,210.99 L735.15,209.67 L734.74,208.38 L734.33,207.11 L733.91,205.87 L733.49,204.66 L733.06,203.48 L732.63,202.33 L732.19,201.21 L731.75,200.11 L731.31,199.05 L730.86,198.02 L730.42,197.02 L729.97,196.06 L729.52,195.12 L729.06,194.22 L728.61,193.36 L728.16,192.53 L727.71,191.73 L727.26,190.97 L726.82,190.25 L726.38,189.56 L725.94,188.91 L725.51,188.29 L725.08,187.72 L724.67,187.18 L724.26,186.68 L723.86,186.21 L723.48,185.79 L723.11,185.40 L722.75,185.05 L722.42,184.74 L722.10,184.46 L721.79,184.22 L721.52,184.01 L721.26,183.83 L721.03,183.68 L720.82,183.56 L720.64,183.47 L720.49,183.40 L720.36,183.34 L720.25,183.30 L720.17,183.28 L720.11,183.26 L720.07,183.26 L720.04,183.25 L720.02,183.25 L720.00,183.25 L719.98,183.25 L719.96,183.25 L719.93,183.26 L719.89,183.26 L719.83,183.28 L719.75,183.30 L719.64,183.34 L719.51,183.40 L719.36,183.47 L719.18,183.56 L718.97,183.68 L718.74,183.83 L718.48,184.01 L718.21,184.22 L717.90,184.46 L717.58,184.74 L717.25,185.05 L716.89,185.40 L716.52,185.79 L716.14,186.21 L715.74,186.68 L715.33,187.18 L714.92,187.72 L714.49,188.29 L714.06,188.91 L713.62,189.56 L713.18,190.25 L712.74,190.97 L712.29,191.73 L711.84,192.53 L711.39,193.36 L710.94,194.22 L710.48,195.12 L710.03,196.06 L709.58,197.02 L709.14,198.02 L708.69,199.05 L708.25,200.11 L707.81,201.21 L707.37,202.33 L706.94,203.48 L706.51,204.66 L706.09,205.87 L705.67,207.11 L705.26,208.38 L704.85,209.67 L704.45,210.99 L704.06,212.34 L703.67,213.71 L703.29,215.10 L702.91,216.52 L702.55,217.97 L702.19,219.43 L701.83,220.92 L701.49,222.43 L701.15,223.96 L700.82,225.52 L700.50,227.09 L700.19,228.68 L699.89,230.29 L699.59,231.92 L699.30,233.57 L699.03,235.24 L698.76,236.92 L698.50,238.62 L698.25,240.33 L698.01,242.06 L697.78,243.80 L697.56,245.56 L697.35,247.32 L697.14,249.11 L696.95,250.90 L696.77,252.70 L696.60,254.52 L696.44,256.34 L696.28,258.18 L696.14,260.02 L696.01,261.87 L695.89,263.73 L695.78,265.60 L695.68,267.47 L695.59,269.35 L695.51,271.23 L695.44,273.12 L695.38,275.01 L695.33,276.90 L695.30,278.80 L695.27,280.70 L695.26,282.60 L695.25,284.50 L695.26,286.40 L695.27,288.30 L695.30,290.20 L695.33,292.10 L695.38,293.99 L695.44,295.88 L695.51,297.77 L695.59,299.65 L695.68,301.53 L695.78,303.40 L695.89,305.27 L696.01,307.13 L696.14,308.98 L696.28,310.82 L696.44,312.66 L696.60,314.48 L696.77,316.30 L696.95,318.10 L697.14,319.89 L697.35,321.68 L697.56,323.44 L697.78,325.20 L698.01,326.94 L698.25,328.67 L698.50,330.38 L698.76,332.08 L699.03,333.76 L699.30,335.43 L699.59,337.08 L699.89,338.71 L700.19,340.32 L700.50,341.91 L700.82,343.48 L701.15,345.04 L701.49,346.57 L701.83,348.08 L702.19,349.57 L702.55,351.03 L702.91,352.48 L703.29,353.90 L703.67,355.29 L704.06,356.66 L704.45,358.01 L704.85,359.33 L705.26,360.62 L705.67,361.89 L706.09,363.13 L706.51,364.34 L706.94,365.52 L707.37,366.67 L707.81,367.79 L708.25,368.89 L708.69,369.95 L709.14,370.98 L709.58,371.98 L710.03,372.94 L710.48,373.88 L710.94,374.78 L711.39,375.64 L711.84,376.47 L712.29,377.27 L712.74,378.03 L713.18,378.75 L713.62,379.44 L714.06,380.09 L714.49,380.71 L714.92,381.28 L715.33,381.82 L715.74,382.32 L716.14,382.79 L716.52,383.21 L716.89,383.60 L717.25,383.95 L717.58,384.26 L717.90,384.54 L718.21,384.78 L718.48,384.99 L718.74,385.17 L718.97,385.32 L719.18,385.44 L719.36,385.53 L719.51,385.60 L719.64,385.66 L719.75,385.70 L719.83,385.72 L719.89,385.74 L719.93,385.74 L719.96,385.75 L719.98,385.75 L720.00,385.75 L720.02,385.75 L720.04,385.75 L720.07,385.74 L720.11,385.74 L720.17,385.72 L720.25,385.70 L720.36,385.66 L720.49,385.60 L720.64,385.53 L720.82,385.44 L721.03,385.32 L721.26,385.17 L721.52,384.99 L721.79,384.78 L722.10,384.54 L722.42,384.26 L722.75,383.95 L723.11,383.60 L723.48,383.21 L723.86,382.79 L724.26,382.32 L724.67,381.82 L725.08,381.28 L725.51,380.71 L725.94,380.09 L726.38,379.44 L726.82,378.75 L727.26,378.03 L727.71,377.27 L728.16,376.47 L728.61,375.64 L729.06,374.78 L729.52,373.88 L729.97,372.94 L730.42,371.98 L730.86,370.98 L731.31,369.95 L731.75,368.89 L732.19,367.79 L732.63,366.67 L733.06,365.52 L733.49,364.34 L733.91,363.13 L734.33,361.89 L734.74,360.62 L735.15,359.33 L735.55,358.01 L735.94,356.66 L736.33,355.29 L736.71,353.90 L737.09,352.48 L737.45,351.03 L737.81,349.57 L738.17,348.08 L738.51,346.57 L738.85,345.04 L739.18,343.48 L739.50,341.91 L739.81,340.32 L740.11,338.71 L740.41,337.08 L740.70,335.43 L740.97,333.76 L741.24,332.08 L741.50,330.38 L741.75,328.67 L741.99,326.94 L742.22,325.20 L742.44,323.44 L742.65,321.68 L742.86,319.89 L743.05,318.10 L743.23,316.30 L743.40,314.48 L743.56,312.66 L743.72,310.82 L743.86,308.98 L743.99,307.13 L744.11,305.27 L744.22,303.40 L744.32,301.53 L744.41,299.65 L744.49,297.77 L744.56,295.88 L744.62,293.99 L744.67,292.10 L744.70,290.20 L744.73,288.30 L744.74,286.40 L744.75,284.50Z" fill="none" stroke="#f00" stroke-width="1.25"/>
<path d="M810.00,397.00 L811.26,396.32 L812.51,395.64 L813.75,394.95 L814.98,394.26 L816.19,393.57 L817.40,392.86 L818.59,392.16 L819.77,391.44 L820.94,390.72 L822.10,390.00 L823.25,389.26 L824.38,388.52 L825.50,387.77 L826.61,387.02 L827.71,386.25 L828.79,385.48 L829.86,384.70 L830.92,383.91 L831.96,383.11 L832.99,382.30 L834.01,381.49 L835.01,380.66 L836.00,379.82 L836.97,378.98 L837.93,378.12 L838.88,377.25 L839.81,376.37 L840.72,375.48 L841.63,374.58 L842.51,373.67 L843.38,372.74 L844.24,371.80 L845.08,370.85 L845.90,369.88 L846.71,368.91 L847.50,367.92 L848.27,366.91 L849.03,365.89 L849.77,364.86 L850.50,363.81 L851.21,362.75 L851.90,361.67 L852.57,360.58 L853.23,359.47 L853.87,358.35 L854.49,357.21 L855.10,356.05 L855.68,354.88 L856.25,353.69 L856.80,352.48 L857.33,351.26 L857.85,350.02 L858.34,348.76 L858.81,347.48 L859.27,346.18 L859.71,344.87 L860.12,343.53 L860.52,342.18 L860.90,340.81 L861.26,339.41 L861.60,338.00 L861.91,336.57 L862.21,335.11 L862.49,333.64 L862.74,332.14 L862.98,330.63 L863.19,329.09 L863.39,327.53 L863.56,325.95 L863.71,324.34 L863.84,322.71 L863.95,321.06 L864.03,319.39 L864.09,317.69 L864.14,315.97 L864.15,314.23 L864.15,312.46 L864.12,310.66 L864.07,308.84 L864.00,307.00 L864.00,307.00 L863.91,304.90 L863.82,302.80 L863.73,300.72 L863.64,298.65 L863.54,296.58 L863.44,294.53 L863.34,292.49 L863.25,290.46 L863.15,288.44 L863.06,286.43 L862.96,284.43 L862.87,282.45 L862.79,280.47 L862.71,278.50 L862.63,276.55 L862.56,274.60 L862.50,272.66 L862.44,270.74 L862.39,268.83 L862.35,266.92 L862.32,265.03 L862.29,263.15 L862.28,261.27 L862.28,259.41 L862.29,257.56 L862.31,255.72 L862.35,253.89 L862.40,252.07 L862.46,250.26 L862.54,248.46 L862.63,246.68 L862.74,244.90 L862.87,243.13 L863.01,241.38 L863.17,239.63 L863.35,237.90 L863.56,236.17 L863.78,234.46 L864.02,232.76 L864.28,231.06 L864.57,229.38 L864.87,227.71 L865.21,226.05 L865.56,224.40 L865.94,222.76 L866.35,221.13 L866.78,219.51 L867.24,217.90 L867.73,216.30 L868.24,214.71 L868.78,213.14 L869.36,211.57 L869.96,210.02 L870.59,208.47 L871.26,206.94 L871.95,205.41 L872.68,203.90 L873.45,202.40 L874.24,200.90 L875.07,199.42 L875.94,197.95 L876.84,196.49 L877.78,195.04 L878.76,193.60 L879.77,192.17 L880.83,190.75 L881.92,189.34 L883.05,187.95 L884.23,186.56 L885.44,185.18 L886.70,183.82 L888.00,182.46 L889.34,181.12 L890.72,179.78 L892.16,178.46 L893.63,177.15 L895.15,175.84 L896.72,174.55 L898.34,173.27 L900.00,172.00" fill="none" stroke="#fff" stroke-width="1.25"/>
<path d="M815.29,406.93 L816.62,406.22 L817.93,405.50 L819.23,404.78 L820.53,404.05 L821.82,403.31 L823.10,402.56 L824.37,401.81 L825.63,401.05 L826.88,400.28 L828.13,399.50 L829.36,398.71 L830.58,397.91 L831.79,397.10 L833.00,396.28 L834.19,395.45 L835.37,394.61 L836.54,393.75 L837.70,392.89 L838.85,392.01 L839.99,391.12 L841.11,390.21 L842.22,389.29 L843.32,388.36 L844.41,387.42 L845.49,386.46 L846.55,385.48 L847.59,384.49 L848.63,383.49 L849.65,382.47 L850.65,381.43 L851.64,380.38 L852.61,379.31 L853.57,378.22 L854.51,377.12 L855.44,376.00 L856.35,374.86 L857.24,373.71 L858.11,372.54 L858.97,371.35 L859.80,370.14 L860.62,368.91 L861.42,367.67 L862.20,366.41 L862.96,365.13 L863.70,363.83 L864.42,362.51 L865.12,361.17 L865.79,359.82 L866.45,358.45 L867.08,357.05 L867.69,355.64 L868.28,354.22 L868.85,352.77 L869.39,351.30 L869.92,349.82 L870.41,348.32 L870.89,346.80 L871.34,345.26 L871.77,343.70 L872.18,342.12 L872.56,340.53 L872.92,338.91 L873.25,337.28 L873.56,335.63 L873.85,333.96 L874.11,332.27 L874.35,330.56 L874.56,328.83 L874.75,327.08 L874.92,325.31 L875.06,323.52 L875.18,321.71 L875.27,319.88 L875.34,318.03 L875.38,316.16 L875.40,314.27 L875.40,312.36 L875.37,310.42 L875.32,308.47 L875.24,306.49 L875.24,306.55 L875.15,304.42 L875.06,302.31 L874.97,300.21 L874.87,298.13 L874.78,296.05 L874.68,294.00 L874.58,291.95 L874.48,289.92 L874.39,287.91 L874.29,285.91 L874.20,283.92 L874.11,281.95 L874.03,279.99 L873.95,278.05 L873.87,276.12 L873.80,274.21 L873.74,272.31 L873.68,270.43 L873.64,268.56 L873.60,266.70 L873.56,264.86 L873.54,263.04 L873.53,261.23 L873.53,259.44 L873.54,257.66 L873.56,255.90 L873.59,254.15 L873.64,252.42 L873.70,250.70 L873.77,249.00 L873.86,247.32 L873.97,245.65 L874.08,244.00 L874.22,242.36 L874.37,240.74 L874.54,239.13 L874.72,237.54 L874.92,235.97 L875.15,234.41 L875.39,232.87 L875.64,231.34 L875.92,229.83 L876.22,228.33 L876.54,226.85 L876.88,225.39 L877.24,223.94 L877.63,222.50 L878.03,221.08 L878.46,219.67 L878.91,218.28 L879.39,216.90 L879.89,215.53 L880.41,214.18 L880.96,212.84 L881.54,211.51 L882.14,210.19 L882.77,208.89 L883.42,207.59 L884.11,206.31 L884.83,205.03 L885.57,203.76 L886.35,202.51 L887.16,201.26 L888.00,200.01 L888.88,198.78 L889.79,197.55 L890.74,196.33 L891.72,195.12 L892.74,193.91 L893.80,192.71 L894.90,191.52 L896.04,190.33 L897.22,189.14 L898.45,187.97 L899.71,186.79 L901.03,185.62 L902.39,184.46 L903.79,183.30 L905.25,182.15 L906.75,181.00" fill="none" stroke="#f00" stroke-width="1.25"/>
</svg></div>
<div id="vscroll" class="a"><div class="a" style="left:4.2px;top:129.2px;width:7.6px;height:317px;border-radius:4px;background:#7f7f7f"></div></div><div class="a" style="left:1153px;top:132px;width:3px;height:666px;background:linear-gradient(90deg,#e6e6e6,#cfcfcf)"></div>
<div id="hscroll" class="a"><div class="a" style="left:147.3px;top:4px;width:681.6px;height:8px;border-radius:4px;background:#7d7d7d"></div></div><div class="a" style="left:1099px;top:732px;width:54px;height:15px;background:#ebebeb"></div><span class="t" style="left:1119px;top:734px;font-size:14px;transform:scaleX(0.87);transform-origin:0 0;color:#111">1 &lt; 10</span>

<div class="a" style="left:72px;top:747px;width:1081px;height:1px;background:#e4e4e4"></div>
<div class="a" style="left:72px;top:748px;width:1081px;height:1.5px;background:#bcbcbc"></div>
<div class="a" style="left:72px;top:749.5px;width:1081px;height:20.5px;background:#fff"></div>
<div class="a" style="left:1139px;top:749.5px;width:14px;height:20.5px;background:#f7f7f7"></div>
<div class="a" style="left:1141.8px;top:750px;width:8.2px;height:16.6px;border-radius:4px;background:#808080"></div>
<span class="t" style="left:77px;top:751.5px;font-size:13.6px;font-style:italic;color:#0a0ae0">Comando: offset</span>
<div class="a" style="left:72px;top:770px;width:1081px;height:1px;background:#c6c6c6"></div>
<div class="a" style="left:72px;top:771px;width:1081px;height:27px;background:#ebebeb"></div>
<span class="t" style="left:73.3px;top:779.5px;font-size:13.1px;color:#111">Seleccionar línea, arco, círculo, elipse, spline o polilínea:</span>
<div class="a" style="left:407.5px;top:776px;width:719px;height:18px;background:#fff"></div>
<div class="a" style="left:1127.4px;top:772.5px;width:25.4px;height:25px;border:1px solid #bdbdbd;background:linear-gradient(#f6f6f6,#e6e6e6)"></div>
<svg class="a" style="left:1127.4px;top:772.5px" width="26" height="25"><rect x="6.5" y="8.5" width="13" height="10" fill="#fff" stroke="#222"/><rect x="6.5" y="8.5" width="13" height="2.5" fill="#111"/></svg>


<div id="panel" class="a">

<div class="a" style="left:-1px;top:0;width:300px;height:1px;background:#bdbdbd"></div>
<div class="a" style="left:-2px;top:1px;width:301px;height:22px;background:linear-gradient(#eeeeee,#e2e2e2 60%,#d9d9d9)"></div>
<div class="a" style="left:-2px;top:22.5px;width:301px;height:1px;background:#aaa"></div>
<span class="t" style="left:128px;top:5.5px;font-size:11.8px;color:#333">Lista de capas</span>
<div class="a" style="left:-1px;top:23.5px;width:299px;height:25px;background:linear-gradient(#f5f5f5,#ebebeb);border-bottom:1.5px solid #a8a8a8"></div>
<div class="a" style="left:58px;top:23.5px;width:1.5px;height:24px;background:#a8a8a8"></div>
<div class="a" style="left:118px;top:23.5px;width:1.5px;height:24px;background:#a8a8a8"></div>
<div class="a" style="left:178px;top:23.5px;width:1.5px;height:24px;background:#a8a8a8"></div>
<div class="a" style="left:238px;top:23.5px;width:1.5px;height:24px;background:#a8a8a8"></div>
<div class="a" style="left:297.5px;top:0;width:1.5px;height:691px;background:#c4c4c4"></div>
<span class="t" style="left:27.3px;top:53px;font-size:13px;color:#111">0</span>
<span class="t" style="left:27.3px;top:73px;font-size:13px;color:#111">Desfase</span>
<svg class="a" style="left:-1156px;top:-107px" width="1500" height="220">
<defs><g id="eye"><path d="M-7.3 0.3 Q-5.5 -5.3 0 -5.5 Q5.5 -5.3 7.3 0.3 Q5 5.5 0 5.5 Q-5 5.5 -7.3 0.3 Z" fill="#000"/><path d="M-4.6 0.5 Q-3 -3 0 -3.2 Q3 -3 4.6 0.5 Q3 3.5 0 3.5 Q-3 3.5 -4.6 0.5 Z" fill="#fff"/><circle cx="0" cy="0.2" r="2.4" fill="#000"/><circle cx="-0.6" cy="-0.6" r="0.7" fill="#666"/></g>
<g id="lock"><path d="M-3.3 0 V-3 A3.3 3.3 0 0 1 3.3 -3 V0" fill="none" stroke="#b8b8b8" stroke-width="1.1"/><rect x="-4.8" y="0" width="9.6" height="7.2" fill="#b8b8b8"/></g>
<g id="pen"><path d="M0 0 L2 -5 L11.5 -14.5 L14 -12 L4.5 -2.5 Z" fill="#e3a63a" stroke="#7a5010" stroke-width="0.6"/><path d="M11.5 -14.5 L12.8 -15.8 L15.3 -13.3 L14 -12 Z" fill="#e02020"/><path d="M0 0 L1 -2.5 L2.5 -1 Z" fill="#333"/></g>
</defs>
<circle cx="1164" cy="117.7" r="7" fill="#6f6f6f"/>
<path d="M1161 114.7 L1167 120.7 M1167 114.7 L1161 120.7" stroke="#f2f2f2" stroke-width="1.6"/>
<circle cx="1181.9" cy="117.7" r="7" fill="#6f6f6f"/>
<rect x="1180.5" y="114" width="5" height="4" fill="none" stroke="#f2f2f2" stroke-width="1"/>
<rect x="1178" y="116.5" width="5.5" height="4.3" fill="#6f6f6f" stroke="#f2f2f2" stroke-width="1"/>
<use href="#eye" x="1184.9" y="142.5"/>
<g opacity="0.35"><use href="#eye" x="1244.8" y="142.7"/></g>
<path d="M1298.8 142.7 h12 M1304.8 136.7 v12" stroke="#6a0000" stroke-width="3.8"/>
<path d="M1299.3 142.7 h11 M1304.8 137.2 v11" stroke="#ee0000" stroke-width="2.6"/>
<path d="M1358.8 142.7 h12" stroke="#7a0000" stroke-width="3.6"/>
<path d="M1359.2 142.7 h11.2" stroke="#ee0000" stroke-width="2.5"/>
<use href="#pen" x="1418.4" y="149.8" transform="scale(1)"/>
<rect x="1161.5" y="163.5" width="15" height="8.3" fill="#fff" stroke="#000" stroke-width="1"/>
<rect x="1161.5" y="183.5" width="15" height="8.3" fill="#f00" stroke="#000" stroke-width="1"/>
<use href="#eye" x="1423" y="166.5"/>
<use href="#eye" x="1423" y="186.4"/>
<use href="#lock" x="1445" y="166.5"/>
<use href="#lock" x="1445" y="186.5"/>
<use href="#pen" x="1394.3" y="193.6"/>
</svg>

</div>
<div id="dock" class="a">

<div class="a" style="left:8px;top:9px;width:26px;height:2px;background:repeating-linear-gradient(90deg,#a8a8a8 0 2px,transparent 2px 6px)"></div>
<div class="a" style="left:1.3px;top:13.3px;width:42.1px;height:42px;border-radius:6px;background:#b8b8b8"></div>
<div class="a" style="left:1.3px;top:310px;width:42.1px;height:42.6px;border-radius:6px;background:#b8b8b8"></div>
<div class="a" style="left:2.7px;top:154px;width:41px;height:1px;background:repeating-linear-gradient(90deg,#8a8a8a 0 1px,transparent 1px 2.5px)"></div>
<div class="a" style="left:2.7px;top:303px;width:41px;height:1px;background:repeating-linear-gradient(90deg,#8a8a8a 0 1px,transparent 1px 2.5px)"></div>
<svg class="a" style="left:-1455px;top:-107px" width="1500" height="520">
<g transform="translate(1463,127)"><rect x="0.5" y="0.5" width="27" height="27" fill="#fff" stroke="#222" stroke-width="1"/><rect x="0.5" y="0.5" width="27" height="4.5" fill="#000"/><rect x="1.8" y="1.6" width="2.6" height="2.6" fill="#fff"/><path d="M8 11 L15 8.5 V20 L8 22.5 Z" fill="#9a9a9a" stroke="#444" stroke-width="0.6"/><path d="M10.5 10 L17.5 7.5 V19 L10.5 21.5 Z" fill="#cfcfcf" stroke="#444" stroke-width="0.6"/><path d="M13 9 L20.5 6.5 V18 L13 20.5 Z" fill="#fff" stroke="#444" stroke-width="0.6"/><path d="M15 17.5 L18.5 11 L18.5 17 Z" fill="none" stroke="#f03030" stroke-width="0.8"/></g>
<g transform="translate(1463,174)"><rect x="0.5" y="0.5" width="27" height="27" fill="#fff" stroke="#222" stroke-width="1"/><rect x="0.5" y="0.5" width="27" height="4.5" fill="#000"/><rect x="1.8" y="1.6" width="2.6" height="2.6" fill="#fff"/><rect x="7" y="10" width="9.5" height="7" fill="#f2e8b0" stroke="#555" stroke-width="0.6"/><circle cx="16" cy="17.5" r="4.3" fill="#f4eec0" stroke="#555" stroke-width="0.6"/></g>
<g transform="translate(1463,220)"><rect x="0.5" y="0.5" width="27" height="27" fill="#fff" stroke="#222" stroke-width="1"/><rect x="0.5" y="0.5" width="27" height="4.5" fill="#000"/><rect x="1.8" y="1.6" width="2.6" height="2.6" fill="#fff"/><rect x="6" y="10" width="16" height="12" rx="2" fill="#f4f4f4" stroke="#b8c8e8" stroke-width="0.9"/></g>
<g transform="translate(1463,276)"><rect x="0.5" y="0.5" width="27" height="27" fill="#fff" stroke="#222" stroke-width="1"/><rect x="0.5" y="0.5" width="27" height="4.5" fill="#000"/><rect x="1.8" y="1.6" width="2.6" height="2.6" fill="#fff"/><rect x="5" y="10" width="3" height="2.5" fill="#000"/><rect x="5" y="15" width="3" height="2.5" fill="#000"/><rect x="5" y="20" width="3" height="2.5" fill="#000"/><rect x="10.5" y="10" width="13" height="2.5" fill="none" stroke="#333" stroke-width="0.6"/><rect x="10.5" y="15" width="13" height="2.5" fill="none" stroke="#333" stroke-width="0.6"/><rect x="10.5" y="20" width="13" height="2.5" fill="none" stroke="#333" stroke-width="0.6"/></g>
<g transform="translate(1463,321.6)"><rect x="0.5" y="0.5" width="27" height="27" fill="#fff" stroke="#222" stroke-width="1"/><rect x="0.5" y="0.5" width="27" height="4.5" fill="#000"/><rect x="1.8" y="1.6" width="2.6" height="2.6" fill="#fff"/><path d="M7.5 9.5 H20.5 L15.5 15 V23 L12.5 20.5 V15 Z" fill="#d8d8d8" stroke="#555" stroke-width="0.7"/></g>
<g transform="translate(1463,367.8)"><rect x="0.5" y="0.5" width="27" height="27" fill="#fff" stroke="#222" stroke-width="1"/><rect x="0.5" y="0.5" width="27" height="4.5" fill="#000"/><rect x="1.8" y="1.6" width="2.6" height="2.6" fill="#fff"/><path d="M7 9 V21 L12 17.5 V12.5 Z" fill="#eee" stroke="#555" stroke-width="0.7"/><rect x="12" y="12" width="9" height="6" fill="#aaa" stroke="#666" stroke-width="0.6"/><path d="M5 15 H24" stroke="#f09090" stroke-width="0.6" stroke-dasharray="1 1"/></g>
<g transform="translate(1463,424)"><rect x="0.5" y="0.5" width="27" height="27" fill="#fff" stroke="#222" stroke-width="1"/><rect x="0.5" y="0.5" width="27" height="4.5" fill="#000"/><rect x="1.8" y="1.6" width="2.6" height="2.6" fill="#fff"/><path d="M4 8.5 h10 M4 11 h9 M4 13.5 h10 M4 16 h10" stroke="#999" stroke-width="0.7"/><path d="M0.5 21.5 H27.5" stroke="#222" stroke-width="0.7"/><path d="M4 24.5 h2 M10 24.5 h14" stroke="#444" stroke-width="0.9"/></g>
<g transform="translate(1463,471)"><rect x="0.5" y="0.5" width="27" height="27" fill="#fff" stroke="#222" stroke-width="1"/><rect x="0.5" y="0.5" width="27" height="4.5" fill="#000"/><rect x="1.8" y="1.6" width="2.6" height="2.6" fill="#fff"/><rect x="8" y="9" width="12" height="15" rx="1" fill="#c8862a" stroke="#8a5a18" stroke-width="0.6"/><rect x="9.5" y="10.5" width="9" height="12" fill="#fbfbfb"/><rect x="11" y="8" width="6" height="2.8" fill="#999" stroke="#555" stroke-width="0.5"/><path d="M11 14 h6 M11 16 h6 M11 18 h5" stroke="#bbb" stroke-width="0.6"/></g>
</svg>

</div>

<div id="status" class="a">

<div class="a" style="left:0;top:0;width:1500px;height:1px;background:#c8c8c8"></div>
<span class="t" style="left:2px;top:9.5px;font-size:10px;letter-spacing:0.1px;color:#111">61.0222,14.6667</span>
<span class="t" style="left:2px;top:29.5px;font-size:10px;letter-spacing:0.1px;color:#111">@61.0222,14.6667</span>
<div class="a" style="left:253px;top:4px;width:1px;height:40px;background:#8a8a8a"></div>
<span class="t" style="left:256px;top:9.5px;font-size:10px;color:#111">62.76&lt;14°</span>
<span class="t" style="left:256px;top:29.5px;font-size:10px;color:#111">@62.76&lt;14°</span>
<div class="a" style="left:506.5px;top:21px;width:6px;height:6px;border-radius:3px;background:#c4c4c4"></div>
<span class="t" style="left:498.6px;top:13.5px;width:200px;text-align:right;font-size:10px;color:#111;letter-spacing:0.1px">Seleccionar línea, arco, círculo, elipse,</span>
<span class="t" style="left:498.6px;top:24.5px;width:200px;text-align:right;font-size:10px;color:#111;letter-spacing:0.1px">spline o polilínea</span>
<svg class="a" style="left:716px;top:7px" width="22" height="32"><rect x="1.5" y="0.8" width="17.5" height="29" rx="8.7" fill="#fff" stroke="#333" stroke-width="0.9"/><path d="M1.7 13.5 H18.8 M10.25 0.8 V13.5" stroke="#333" stroke-width="0.8"/><rect x="8.6" y="3.2" width="3.3" height="7" rx="1.6" fill="#fff" stroke="#333" stroke-width="0.8"/></svg>
<span class="t" style="left:754.4px;top:20px;font-size:10px;letter-spacing:0.15px;color:#111">Cancelar</span>
<div class="a" style="left:940px;top:21px;width:6px;height:6px;border-radius:3px;background:#c4c4c4"></div>
<span class="t" style="left:949px;top:20px;font-size:10px;letter-spacing:0.1px;color:#111">No hay entidades seleccionadas.</span>
<div class="a" style="left:1269px;top:21px;width:6px;height:6px;border-radius:3px;background:#c4c4c4"></div>

</div>

<svg class="a" style="left:0;top:0;pointer-events:none;z-index:3" width="500" height="140">
<defs>
<radialGradient id="hl" cx="0.5" cy="0.5" r="0.5">
<stop offset="0" stop-color="#ffffff" stop-opacity="0.06"/>
<stop offset="0.8" stop-color="#e4ecf4" stop-opacity="0.15"/>
<stop offset="0.88" stop-color="#a9bfd6" stop-opacity="0.45"/>
<stop offset="0.93" stop-color="#9ab4d0" stop-opacity="0.7"/>
<stop offset="0.98" stop-color="#9fb7d1" stop-opacity="0.6"/>
<stop offset="1" stop-color="#a8bfd6" stop-opacity="0"/>
</radialGradient>
<linearGradient id="rh" x1="0" x2="1"><stop offset="0" stop-color="#f05a5a" stop-opacity="0"/><stop offset="0.12" stop-color="#f05a5a" stop-opacity="0.75"/><stop offset="0.88" stop-color="#f05a5a" stop-opacity="0.75"/><stop offset="1" stop-color="#f05a5a" stop-opacity="0"/></linearGradient>
<linearGradient id="rv" x1="0" x2="0" y1="0" y2="1"><stop offset="0" stop-color="#f05a5a" stop-opacity="0"/><stop offset="0.2" stop-color="#f05a5a" stop-opacity="0.75"/><stop offset="0.8" stop-color="#f05a5a" stop-opacity="0.75"/><stop offset="1" stop-color="#f05a5a" stop-opacity="0"/></linearGradient>
</defs>
<rect x="318" y="78" width="78" height="20" fill="#ffd9d9"/>
<rect x="381.2" y="78.5" width="14.8" height="19" fill="#f4cdcd"/>
<path d="M381.2 79 V97" stroke="#e8b8b8" stroke-width="1"/>
<path d="M385.5 84.3 L388.8 81 L392.1 84.3 M385.5 91.3 L388.8 94.6 L392.1 91.3" fill="none" stroke="#3a2a2a" stroke-width="1.1"/>
<text x="320.8" y="92" font-family="Liberation Sans" font-size="13" fill="#2a1f1f" stroke="#2a1f1f" stroke-width="0.3">1</text>
<rect x="309.3" y="77" width="94.3" height="2" fill="url(#rh)"/>
<rect x="309.3" y="97" width="94.3" height="2" fill="url(#rh)"/>
<rect x="317" y="69.5" width="2" height="37" fill="url(#rv)"/>
<rect x="395.2" y="69.5" width="2" height="37" fill="url(#rv)"/>
<circle cx="357" cy="88" r="38.5" fill="url(#hl)"/>
<path transform="translate(357.2 87.6) scale(1.08) translate(-357.2 -87.6)" d="M357.2 87.6 L357.2 110.2 L362.2 105.6 L366 113.8 L370 112.2 L366.3 104.3 L372.6 103.8 Z" fill="#fff" stroke="#000" stroke-width="1.15" stroke-linejoin="miter"/>
</svg>

</body></html>
